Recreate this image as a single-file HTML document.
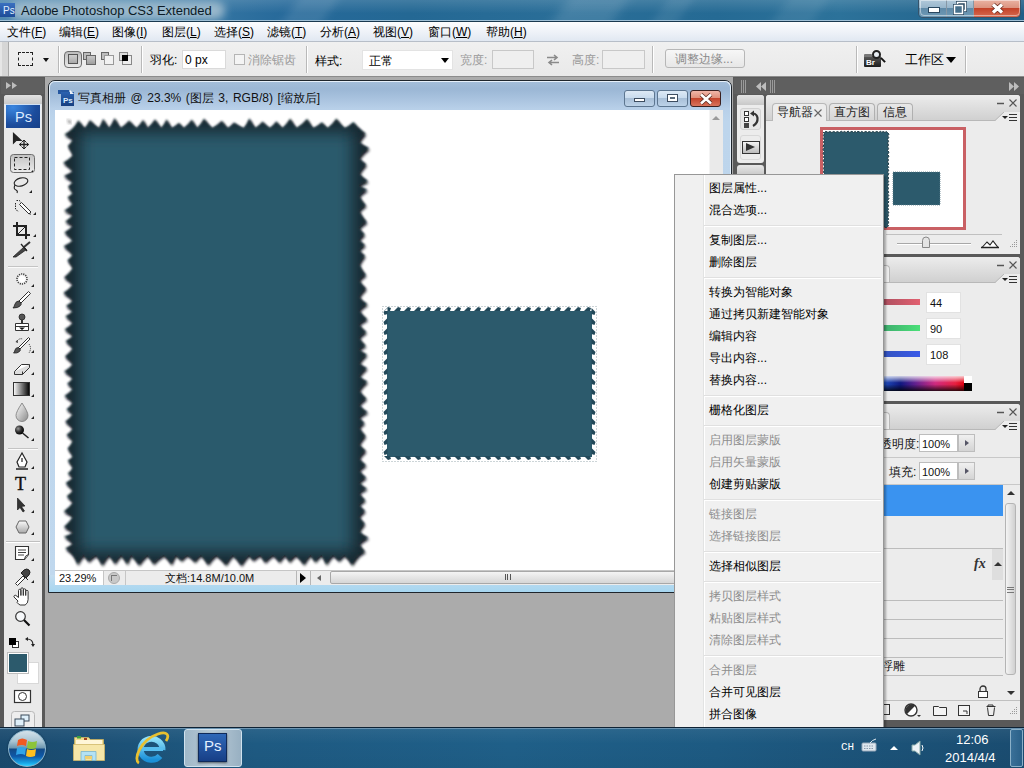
<!DOCTYPE html>
<html><head><meta charset="utf-8">
<style>
*{margin:0;padding:0;box-sizing:border-box}
html,body{width:1024px;height:768px;overflow:hidden;background:#ababab;font-family:"Liberation Sans",sans-serif;font-size:12px;color:#000;line-height:1}
.a{position:absolute}
svg{position:absolute;overflow:visible}
.t{position:absolute;white-space:nowrap;font-size:12px;line-height:14px}
.u{text-decoration:underline}
.mi{position:absolute;white-space:nowrap;font-size:12px;line-height:14px;color:#000}
.cm{position:absolute;left:709px;white-space:nowrap;font-size:12px;line-height:14px;color:#000}
.cm.d{color:#8d8d8d}
.sep{position:absolute;left:704px;width:177px;height:2px;border-top:1px solid #e0e0e0;border-bottom:1px solid #fff}
.vs{position:absolute;width:2px;border-left:1px solid #b9b9b9;border-right:1px solid #fff}
.inp{position:absolute;background:#fff;border:1px solid #c9c9c9}
.tb{position:absolute;left:0;width:45px;height:22px}
i.cjg{display:inline-block;width:1em;height:1em;vertical-align:-0.15em;position:relative;font-style:normal}
i.cjg::before{content:"";position:absolute;left:.1em;top:.06em;right:.12em;bottom:.1em;border:1px solid currentColor;opacity:.85;background:linear-gradient(currentColor,currentColor) 50% 0/1px 100% no-repeat,linear-gradient(currentColor,currentColor) 0 45%/100% 1px no-repeat}
</style></head><body>
<!-- title bar -->
<div class="a" style="left:0;top:0;width:1024px;height:22px;background:linear-gradient(90deg,#4f88b0 0%,#3f7ea8 15%,#26699a 28%,#246894 40%,#2a6e98 55%,#256a94 70%,#2c729a 82%,#205f88 100%);overflow:hidden">
 <div class="a" style="left:290px;top:-5px;width:40px;height:32px;background:rgba(255,255,255,.10);transform:skewX(-35deg);filter:blur(5px)"></div>
 <div class="a" style="left:560px;top:-5px;width:60px;height:32px;background:rgba(255,255,255,.12);transform:skewX(-35deg);filter:blur(6px)"></div>
 <div class="a" style="left:660px;top:-5px;width:25px;height:32px;background:rgba(255,255,255,.08);transform:skewX(-35deg);filter:blur(4px)"></div>
 <div class="a" style="left:780px;top:-5px;width:40px;height:32px;background:rgba(255,255,255,.08);transform:skewX(-35deg);filter:blur(5px)"></div>
</div>
<div class="a" style="left:0;top:0;width:1024px;height:22px;background:linear-gradient(#ffffff22,#ffffff00 60%)"></div>
<div class="a" style="left:10px;top:1px;width:215px;height:19px;border-radius:10px;background:#a4bfd0;filter:blur(4px);opacity:.9"></div>
<div class="a" style="left:0;top:20px;width:1024px;height:1px;background:#9fc0d6"></div>
<div class="a" style="left:0;top:21px;width:1024px;height:1px;background:#1a3a50"></div>
<!-- ps icon -->
<div class="a" style="left:0;top:3px;width:15px;height:14px;background:linear-gradient(#3a70c0,#1d4c98)"></div>
<div class="a" style="left:3px;top:5px;font-size:10px;line-height:11px;color:#e0f0ff">Ps</div>
<div class="t" style="left:21px;top:3px;font-size:13px;line-height:15px;color:#0b1a26">Adobe Photoshop CS3 Extended</div>
<!-- window buttons -->
<div class="a" style="left:918px;top:0;width:103px;height:18px;border:1px solid #36536a;border-top:none;border-radius:0 0 5px 5px;overflow:hidden">
  <div class="a" style="left:0;top:0;width:28px;height:17px;background:linear-gradient(#b1c9da 0%,#98b6cb 45%,#5f8aa8 50%,#6f9ab6 100%);border-right:1px solid #36536a"></div>
  <div class="a" style="left:28px;top:0;width:27px;height:17px;background:linear-gradient(#b1c9da 0%,#98b6cb 45%,#5f8aa8 50%,#6f9ab6 100%);border-right:1px solid #36536a"></div>
  <div class="a" style="left:55px;top:0;width:47px;height:17px;background:linear-gradient(#eab2a2 0%,#dc9480 45%,#c4432a 50%,#d56a50 100%)"></div>
  <div class="a" style="left:1px;top:0;width:100px;height:16px;border-top:none;border:1px solid rgba(255,255,255,.45);border-radius:0 0 4px 4px"></div>
  <div class="a" style="left:27px;top:0;width:1px;height:17px;background:rgba(255,255,255,.4)"></div>
  <div class="a" style="left:54px;top:0;width:1px;height:17px;background:rgba(255,255,255,.4)"></div>
  <div class="a" style="left:10px;top:8px;width:10px;height:4px;background:#fff;border:1px solid #2a4860;box-sizing:content-box;margin:-1px"></div>
  <svg width="20" height="16" style="left:33px;top:1px"><rect x="5.5" y="1.5" width="8" height="8" fill="none" stroke="#2a4860" stroke-width="3"/><rect x="5.5" y="1.5" width="8" height="8" fill="none" stroke="#fff" stroke-width="1.5"/><rect x="2.5" y="4.5" width="8" height="8" fill="#46708c" stroke="#2a4860" stroke-width="3"/><rect x="2.5" y="4.5" width="8" height="8" fill="#46708c" stroke="#fff" stroke-width="1.5"/></svg>
  <svg width="20" height="16" style="left:69px;top:1px"><path d="M5,3.5 L14,11.5 M14,3.5 L5,11.5" stroke="#6a2a1c" stroke-width="5"/><path d="M5,3.5 L14,11.5 M14,3.5 L5,11.5" stroke="#fff" stroke-width="3.4"/></svg>
</div>
<!-- menu bar -->
<div class="a" style="left:0;top:22px;width:1024px;height:20px;background:linear-gradient(#fcfdfe 0%,#eef2f8 50%,#dfe7f1 100%)"></div>
<div class="a" style="left:0;top:41px;width:1024px;height:1px;background:#b7bec8"></div>
<div class="mi" style="left:7px;top:25px">文件(<span class="u">F</span>)</div>
<div class="mi" style="left:59px;top:25px">编辑(<span class="u">E</span>)</div>
<div class="mi" style="left:112px;top:25px">图像(<span class="u">I</span>)</div>
<div class="mi" style="left:162px;top:25px">图层(<span class="u">L</span>)</div>
<div class="mi" style="left:214px;top:25px">选择(<span class="u">S</span>)</div>
<div class="mi" style="left:267px;top:25px">滤镜(<span class="u">T</span>)</div>
<div class="mi" style="left:320px;top:25px">分析(<span class="u">A</span>)</div>
<div class="mi" style="left:373px;top:25px">视图(<span class="u">V</span>)</div>
<div class="mi" style="left:428px;top:25px">窗口(<span class="u">W</span>)</div>
<div class="mi" style="left:486px;top:25px">帮助(<span class="u">H</span>)</div>
<!-- options bar -->
<div class="a" style="left:0;top:42px;width:1024px;height:34px;background:linear-gradient(#f0f0f0,#e9e9e9)"></div>
<div class="a" style="left:0;top:76px;width:1024px;height:1px;background:#8c8c8c"></div>
<div class="a" style="left:0;top:42px;width:9px;height:34px;background:#d6d6d6;border-left:2px solid #e6e6e6;border-right:1px solid #a9a9a9"></div>
<div class="vs" style="left:58px;top:46px;height:27px"></div>
<div class="vs" style="left:141px;top:46px;height:27px"></div>
<div class="vs" style="left:306px;top:46px;height:27px"></div>
<div class="vs" style="left:652px;top:46px;height:27px"></div>
<div class="vs" style="left:856px;top:46px;height:27px"></div>
<div class="vs" style="left:965px;top:46px;height:27px"></div>
<!-- marquee icon -->
<div class="a" style="left:18px;top:52px;width:15px;height:14px;border:1px dashed #222"></div>
<div class="a" style="left:43px;top:58px;width:0;height:0;border-left:3px solid transparent;border-right:3px solid transparent;border-top:4px solid #111"></div>
<!-- selection modes -->
<div class="a" style="left:64px;top:51px;width:18px;height:17px;border:1px solid #6d6d6d;border-radius:4px;background:linear-gradient(#bdbdbd,#e9e9e9)"></div>
<div class="a" style="left:68px;top:54px;width:10px;height:10px;border:1px solid #555;background:linear-gradient(#cfcfcf,#a9a9a9)"></div>
<div class="a" style="left:83px;top:52px;width:8px;height:8px;border:1px solid #666;background:#bdbdbd"></div>
<div class="a" style="left:86px;top:55px;width:10px;height:10px;border:1px solid #666;background:linear-gradient(#c8c8c8,#9f9f9f)"></div>
<div class="a" style="left:101px;top:52px;width:8px;height:8px;border:1px solid #666;background:#bdbdbd"></div>
<div class="a" style="left:104px;top:55px;width:10px;height:10px;border:1px solid #999;background:#f2f2f2"></div>
<div class="a" style="left:119px;top:52px;width:9px;height:9px;border:1px solid #888;background:#ddd"></div>
<div class="a" style="left:122px;top:55px;width:10px;height:10px;border:1px solid #888;background:#eee"></div>
<div class="a" style="left:122px;top:55px;width:6px;height:6px;background:#000"></div>
<!-- feather -->
<div class="t" style="left:150px;top:53px">羽化:</div>
<div class="inp" style="left:182px;top:50px;width:44px;height:19px;border-color:#dadada"></div>
<div class="t" style="left:185px;top:53px;font-size:12px">0 px</div>
<div class="a" style="left:234px;top:54px;width:11px;height:11px;border:1px solid #b5b5b5;background:#f4f4f4"></div>
<div class="t" style="left:248px;top:53px;color:#9a9a9a">消除锯齿</div>
<!-- style -->
<div class="t" style="left:315px;top:54px">样式:</div>
<div class="inp" style="left:362px;top:50px;width:91px;height:20px;border-color:#e3e3e3"></div>
<div class="t" style="left:369px;top:54px">正常</div>
<div class="a" style="left:441px;top:58px;width:0;height:0;border-left:4px solid transparent;border-right:4px solid transparent;border-top:5px solid #000"></div>
<div class="t" style="left:460px;top:53px;color:#9a9a9a">宽度:</div>
<div class="inp" style="left:492px;top:50px;width:42px;height:19px;background:#efefef;border-color:#c8c8c8"></div>
<svg width="14" height="12" style="left:546px;top:54px"><path d="M1,3.5 h10 M8,1 l3,2.5 l-3,2.5 M13,8.5 h-10 M6,6 l-3,2.5 l3,2.5" fill="none" stroke="#8a8a8a" stroke-width="1.6"/></svg>
<div class="t" style="left:572px;top:53px;color:#9a9a9a">高度:</div>
<div class="inp" style="left:602px;top:50px;width:43px;height:19px;background:#efefef;border-color:#c8c8c8"></div>
<div class="a" style="left:665px;top:49px;width:80px;height:19px;border:1px solid #b7b7b7;border-radius:3px;background:linear-gradient(#f7f7f7,#e7e7e7)"></div>
<div class="t" style="left:675px;top:52px;color:#8a8a8a">调整边缘...</div>
<!-- bridge -->
<div class="a" style="left:864px;top:56px;width:17px;height:11px;background:linear-gradient(#5a5a5a,#1d1d1d);border-radius:1px"></div>
<div class="a" style="left:864px;top:54px;width:8px;height:3px;background:#777;border-radius:1px 1px 0 0"></div>
<div class="t" style="left:866px;top:58px;font-size:8px;line-height:9px;color:#fff;font-weight:bold">Br</div>
<div class="a" style="left:872px;top:50px;width:9px;height:9px;border:2px solid #222;border-radius:50%;background:#e8eef4"></div>
<div class="a" style="left:880px;top:59px;width:6px;height:2px;background:#111;transform:rotate(45deg)"></div>
<div class="t" style="left:905px;top:52px;font-size:13px;line-height:15px">工作区</div>
<div class="a" style="left:946px;top:57px;width:0;height:0;border-left:5px solid transparent;border-right:5px solid transparent;border-top:6px solid #000"></div>
<!-- toolbox -->
<div class="a" style="left:0;top:77px;width:45px;height:650px;background:#595959"></div>
<div class="a" style="left:1px;top:78px;width:43px;height:16px;background:#5f5f5f"></div>
<svg width="14" height="8" style="left:6px;top:82px"><path d="M0,0 l5,3.5 l-5,3.5Z M6,0 l5,3.5 l-5,3.5Z" fill="#bdbdbd"/></svg>
<div class="a" style="left:4px;top:95px;width:38px;height:632px;background:#e9e9e9;border-radius:3px 3px 0 0"></div>
<div class="a" style="left:4px;top:95px;width:38px;height:9px;background:linear-gradient(#e2e2e2,#c9c9c9);border-radius:3px 3px 0 0"></div>
<div class="a" style="left:5px;top:104px;width:36px;height:24px;background:radial-gradient(ellipse at 20% 10%,#3a86e0,#1c4c9c 60%,#173f86);border-top:1px solid #cfe0f4;border-left:1px solid #e8eef6;border-right:1px solid #e8eef6"></div>
<div class="t" style="left:15px;top:109px;font-size:14.5px;line-height:16px;color:#dcebff">Ps</div>
<svg width="45" height="650" style="left:0;top:77px" viewBox="0 77 45 650">
 <g fill="none" stroke="#222" stroke-width="1.2">
  <!-- move -->
  <path d="M13.5,133.5 L13.5,143 L16,140.5 L21,140.5 Z" fill="#222"/>
  <path d="M24,140 v9 M19.5,144.5 h9" stroke-width="1.3"/>
  <path d="M22,142 l2,-2 l2,2 M22,147 l2,2 l2,-2 M21.5,142.5 l-2,2 l2,2 M26.5,142.5 l2,2 l-2,2" stroke-width="1"/>
 </g>
 <!-- marquee selected -->
 <rect x="10.5" y="154.5" width="24" height="18" rx="3" fill="url(#gsel)" stroke="#6b6b6b"/>
 <rect x="14.5" y="157.5" width="15" height="12" fill="none" stroke="#222" stroke-dasharray="3,2"/>
 <defs><linearGradient id="gsel" x1="0" y1="0" x2="0" y2="1"><stop offset="0" stop-color="#c2c2c2"/><stop offset="1" stop-color="#ececec"/></linearGradient></defs>
 <g fill="none" stroke="#222" stroke-width="1.1">
  <!-- lasso -->
  <ellipse cx="21" cy="182" rx="7" ry="4" transform="rotate(-15 21 182)"/>
  <path d="M15,185 q-2,4 1,5 q2,1 1,3"/>
  <!-- magic wand -->
  <path d="M16.5,200.5 h3 l1,2 M15.5,203 v6 l3,3" stroke-dasharray="1.5,1" stroke-width="1"/>
  <path d="M19.5,204.5 L21.5,202.5 L31,212 L29,214Z" fill="#fff" stroke="#333" stroke-width="1"/>
  <path d="M29,214 l2,1 l-1,-2.5" fill="#333" stroke="none"/>
  <!-- crop -->
  <path d="M17,222 v13 h13 M13,226 h13 v13" stroke-width="2"/>
  <path d="M17,235 L27,225" stroke-width="1"/>
  <!-- slice -->
  <path d="M13,257 L24,247 L26.5,249.5 L16,257Z" fill="#444" stroke="#222" stroke-width=".8"/>
  <path d="M24,247 L30,242" stroke="#333" stroke-width="2"/>
  <path d="M21,244 l6,7" stroke="#222" stroke-width="1.3"/>
 </g>
 <line x1="8" y1="266.5" x2="38" y2="266.5" stroke="#c4c4c4"/>
 <line x1="8" y1="267.5" x2="38" y2="267.5" stroke="#fafafa"/>
 <g fill="none" stroke="#222" stroke-width="1.1">
  <!-- healing -->
  <circle cx="22" cy="279" r="5" fill="#f4f4f4" stroke="#444" stroke-width="1.6" stroke-dasharray="1.2,1"/>
  <circle cx="22" cy="279" r="3" fill="#fff" stroke="none"/>
  <!-- brush -->
  <path d="M30.5,293.5 L21,303 L19,301 L28.5,291.5Z" fill="#fff" stroke="#333" stroke-width="1"/>
  <path d="M19,301 q-3,0 -4,3 q-1,3 -2,4 q5,0 7,-2 q2,-2 1,-3Z" fill="#555" stroke="#222" stroke-width=".8"/>
  <!-- stamp -->
  <circle cx="22" cy="317" r="3" fill="#555" stroke="#222" stroke-width=".8"/>
  <path d="M21,320 h2 v3 h-2Z" fill="#333" stroke="none"/>
  <path d="M15.5,323.5 h13 v7 h-13Z" fill="#fff" stroke="#333" stroke-width="1"/>
  <path d="M15.5,326.5 h13" stroke="#333" stroke-width="1"/>
  <path d="M19,327.5 h6 l-3,2.5Z" fill="#111" stroke="none"/>
  <!-- history brush -->
  <path d="M30,339 L20,349 L18.5,347.5 L28.5,337.5Z" fill="#fff" stroke="#333" stroke-width="1"/>
  <path d="M18.5,347.5 q-3,0 -3.5,2.5 q-.5,2.5 -1.5,3 q4,.5 6,-1.5 q1.5,-1.5 .5,-2.5Z" fill="#555" stroke="#222" stroke-width=".8"/>
  <path d="M17,341 q2,-3 6,-2 M29,344 q3,4 0,9" fill="none" stroke="#333" stroke-width="1" stroke-dasharray="1.2,1"/>
  <path d="M15.5,342 l2,-2 l.5,3Z" fill="#333" stroke="none"/>
  <!-- eraser -->
  <path d="M14.5,371.5 L21.5,364.5 H29.5 L22.5,371.5Z" fill="#fff" stroke="#333" stroke-width="1"/>
  <path d="M14.5,371.5 v3 h8 l7,-7 v-3 M22.5,371.5 v3" fill="#ddd" stroke="#333" stroke-width="1"/>
 </g>
 <!-- gradient -->
 <defs><linearGradient id="grd"><stop offset="0" stop-color="#fff"/><stop offset="1" stop-color="#000"/></linearGradient></defs>
 <rect x="13.5" y="382.5" width="16" height="13" fill="url(#grd)" stroke="#333"/>
 <defs>
  <linearGradient id="gdrop" x1="0" y1="0" x2="1" y2="1"><stop offset="0" stop-color="#fff"/><stop offset="1" stop-color="#8a8a8a"/></linearGradient>
  <radialGradient id="gball" cx=".35" cy=".35" r=".7"><stop offset="0" stop-color="#999"/><stop offset=".5" stop-color="#333"/><stop offset="1" stop-color="#000"/></radialGradient>
  <linearGradient id="ghex" x1="0" y1="0" x2="0" y2="1"><stop offset="0" stop-color="#fafafa"/><stop offset="1" stop-color="#aaa"/></linearGradient>
 </defs>
 <path d="M22,403 q-6,9 -6,12.5 a6,6 0 0 0 12,0 q0,-3.5 -6,-12.5Z" fill="url(#gdrop)" stroke="#777" stroke-width=".8"/>
 <circle cx="19.5" cy="430" r="4.5" fill="url(#gball)"/>
 <path d="M22.5,433 l6,5" stroke="#222" stroke-width="1.5"/>
 <line x1="8" y1="448.5" x2="38" y2="448.5" stroke="#c4c4c4"/>
 <line x1="8" y1="449.5" x2="38" y2="449.5" stroke="#fafafa"/>
 <g fill="none" stroke="#222" stroke-width="1.2">
  <!-- pen -->
  <path d="M22,453 L17,462 L19,467 H25 L27,462 Z" fill="#fff"/>
  <path d="M22,458 v4" />
  <path d="M16,469 h12" stroke-width="1.5"/>
 </g>
 <text x="15" y="490" font-family="Liberation Serif" font-size="18" fill="#111" stroke="#111" stroke-width=".4">T</text>
 <path d="M17.5,498 L17.5,510 L20,507.5 L23,512 L24.5,511 L21.5,506.5 L25,506 Z" fill="#333" stroke="#111" stroke-width=".6"/>
 <path d="M16,527 L19,521 L26,521 L29,527 L26,533 L19,533 Z" fill="url(#ghex)" stroke="#666" stroke-width="1"/>
 <line x1="6" y1="541.5" x2="40" y2="541.5" stroke="#c0c0c0"/>
 <line x1="6" y1="542.5" x2="40" y2="542.5" stroke="#fff"/>
 <g fill="none" stroke="#222" stroke-width="1.1">
  <!-- notes -->
  <path d="M15.5,546.5 h13 v8 l-4,5 h-9 Z" fill="#fff" stroke="#333" stroke-width="1.1"/>
  <path d="M24.5,559.5 q0,-4 4,-5" fill="#ddd" stroke="#333" stroke-width="1"/>
  <path d="M18,550 h8 M18,552.5 h8 M18,555 h6" stroke="#444" stroke-width="1"/>
  <!-- eyedropper -->
  <path d="M15.5,583.5 L23,576 L25,578 L17.5,585.5Z" fill="#fff" stroke="#333" stroke-width="1"/>
  <path d="M22,574 l6,6 M24,570 q3,-2 5,0 q2,2 0,5 l-3,3 l-5,-5Z" fill="#444" stroke="#222" stroke-width="1"/>
 </g>
 <!-- hand -->
 <path d="M18,601 l-4,-4 a1.3,1.3 0 0 1 2,-1.5 l2.5,2 v-7 a1.2,1.2 0 0 1 2.4,0 v5 v-6.5 a1.2,1.2 0 0 1 2.4,0 v6.5 v-5.5 a1.2,1.2 0 0 1 2.4,0 v5.5 v-4 a1.2,1.2 0 0 1 2.4,0 v8 q0,4 -3,5.5 h-5 q-2,-1 -3,-2.5Z" fill="#fff" stroke="#333" stroke-width="1"/>
 <!-- zoom -->
 <circle cx="20.5" cy="616.5" r="4.8" fill="#f6f8fa" stroke="#333" stroke-width="1.2"/>
 <path d="M24,620 l5.5,5.5" stroke="#111" stroke-width="2.2"/>
 <!-- default colors -->
 <rect x="12.5" y="641.5" width="6" height="6" fill="#fff" stroke="#333"/>
 <rect x="9" y="638" width="7" height="7" fill="#000"/>
 <path d="M27,639 q6,0 6,6" fill="none" stroke="#222" stroke-width="1.2"/>
 <path d="M25,639 l3,-2 v4Z M33,647 l-2,-3 h4Z" fill="#222"/>
 <!-- swatches -->
 <rect x="17.5" y="662.5" width="21" height="21" fill="#fff" stroke="#d8d8d8"/>
 <rect x="8.5" y="653.5" width="19" height="19" fill="#2c5a6c" stroke="#fff"/>
 <rect x="7.5" y="652.5" width="21" height="21" fill="none" stroke="#bdbdbd"/>
 <!-- quick mask -->
 <rect x="14.5" y="690.5" width="16" height="12" fill="#fff" stroke="#333" stroke-width="1.2"/>
 <circle cx="22.5" cy="696.5" r="4" fill="#fff" stroke="#333"/>
 <!-- screen mode -->
 <rect x="11.5" y="711.5" width="23" height="18" rx="3" fill="#eee" stroke="#b8b8b8"/>
 <rect x="21" y="715" width="8" height="6" fill="#dff0fa" stroke="#3a4a5a"/>
 <rect x="15" y="719" width="9" height="7" fill="#dff0fa" stroke="#3a4a5a"/>
 <!-- corner arrows -->
 <g fill="#222">
  <path d="M29,193 h3 v-3Z M33,215 h3 v-3Z M33,237 h3 v-3Z M31,259 h3 v-3Z M31,287 h3 v-3Z M31,309 h3 v-3Z M31,331 h3 v-3Z M31,353 h3 v-3Z M31,375 h3 v-3Z M31,397 h3 v-3Z M31,419 h3 v-3Z M31,441 h3 v-3Z M31,469 h3 v-3Z M31,491 h3 v-3Z M31,513 h3 v-3Z M31,535 h3 v-3Z M31,561 h3 v-3Z M31,583 h3 v-3Z M31,172 h2 v-2Z"/>
 </g>
</svg>
<!-- document window -->
<div class="a" style="left:48px;top:80px;width:684px;height:513px;border:1px solid #1e252c;border-radius:7px 7px 0 0;background:linear-gradient(#a4bed9 0px,#9bb7d5 8px,#a9c3df 18px,#b8d0e9 28px,#bdd5ec 40px,#c0d8ee 100%)"></div>
<div class="a" style="left:49px;top:81px;width:682px;height:511px;border:1px solid #e6f0fa;border-bottom:none;border-radius:6px 6px 0 0"></div>
<div class="a" style="left:49px;top:575px;width:682px;height:17px;background:linear-gradient(#c4dcef,#a6d6f0)"></div>
<!-- doc icon -->
<div class="a" style="left:58px;top:90px;width:16px;height:16px">
 <div class="a" style="left:0;top:0;width:11px;height:4px;background:#2557a0"></div>
 <div class="a" style="left:3px;top:2px;width:13px;height:14px;background:linear-gradient(#2b62b0,#163f80)"></div>
 <div class="a" style="left:12px;top:0;width:0;height:0;border-left:4px solid #fff;border-top:4px solid transparent;opacity:.9"></div>
 <div class="a" style="left:5px;top:6px;font-size:8px;line-height:9px;color:#d8ecff;font-weight:bold">Ps</div>
</div>
<div class="t" style="left:78px;top:91px;font-size:12px;word-spacing:1.2px;line-height:15px;color:#111">写真相册 @ 23.3% (图层 3, RGB/8) [缩放后]</div>
<!-- doc window buttons -->
<div class="a" style="left:624px;top:90px;width:31px;height:17px;border:1px solid #5d7690;border-radius:3px;background:linear-gradient(#dde9f5 0%,#c9dcee 45%,#a9c0d8 50%,#bcd2e8 100%)"></div>
<div class="a" style="left:634px;top:98px;width:11px;height:4px;background:#fff;border:1px solid #3d4d60"></div>
<div class="a" style="left:657px;top:90px;width:31px;height:17px;border:1px solid #5d7690;border-radius:3px;background:linear-gradient(#dde9f5 0%,#c9dcee 45%,#a9c0d8 50%,#bcd2e8 100%)"></div>
<div class="a" style="left:667px;top:94px;width:11px;height:8px;background:#fff;border:1px solid #3d4d60"></div>
<div class="a" style="left:670px;top:97px;width:5px;height:2px;background:#5a6a7a"></div>
<div class="a" style="left:690px;top:90px;width:31px;height:17px;border:1px solid #3a2020;border-radius:3px;background:linear-gradient(#f0b6a8 0%,#e0917c 45%,#c4452d 50%,#d9745c 100%)"></div>
<svg width="14" height="12" style="left:699px;top:93px"><path d="M2,1.5 L12,10.5 M12,1.5 L2,10.5" stroke="#5a2a20" stroke-width="4.2"/><path d="M2,1.5 L12,10.5 M12,1.5 L2,10.5" stroke="#fff" stroke-width="2.6"/></svg>
<!-- canvas -->
<div class="a" style="left:55px;top:110px;width:654px;height:460px;background:#fff"></div>
<!-- v scrollbar -->
<div class="a" style="left:709px;top:110px;width:14px;height:460px;background:#eaeaea;border-left:1px solid #f4f4f4"></div>
<div class="a" style="left:712px;top:116px;width:0;height:0;border-left:4px solid transparent;border-right:4px solid transparent;border-bottom:4px solid #9a9a9a"></div>
<!-- status bar -->
<div class="a" style="left:55px;top:570px;width:668px;height:15px;background:#ececec;border-top:1px solid #c6c6c6"></div>
<div class="a" style="left:55px;top:571px;width:48px;height:14px;background:#fff"></div>
<div class="t" style="left:59px;top:572px;font-size:11px;line-height:13px;color:#111">23.29%</div>
<div class="a" style="left:103px;top:571px;width:1px;height:14px;background:#c6c6c6"></div>
<div class="a" style="left:108px;top:572px;width:12px;height:12px;border-radius:50%;background:#c8c8c8;border:1px solid #aaa"></div>
<div class="a" style="left:111px;top:575px;width:6px;height:6px;border:1px solid #777;border-right:none;border-bottom:none"></div>
<div class="a" style="left:125px;top:571px;width:1px;height:14px;background:#c6c6c6"></div>
<div class="t" style="left:165px;top:572px;font-size:11px;line-height:13px;color:#111">文档:14.8M/10.0M</div>
<div class="a" style="left:296px;top:571px;width:1px;height:14px;background:#b6b6b6"></div>
<div class="a" style="left:300px;top:573px;width:0;height:0;border-top:5px solid transparent;border-bottom:5px solid transparent;border-left:6px solid #000"></div>
<div class="a" style="left:310px;top:571px;width:1px;height:14px;background:#b6b6b6"></div>
<div class="a" style="left:317px;top:575px;width:0;height:0;border-top:3px solid transparent;border-bottom:3px solid transparent;border-right:4px solid #666"></div>
<div class="a" style="left:330px;top:571px;width:360px;height:13px;border:1px solid #a8a8a8;border-radius:2px;background:linear-gradient(#f4f4f4,#d6d6d6)"></div>
<div class="a" style="left:505px;top:574px;width:6px;height:6px;border-left:1px solid #555;border-right:1px solid #555"></div>
<div class="a" style="left:507px;top:574px;width:1px;height:6px;background:#555"></div>
<!-- shapes -->
<svg width="1024" height="768" style="left:0;top:0" viewBox="0 0 1024 768">
 <defs>
  <clipPath id="cvclip"><rect x="55" y="110" width="654" height="460"/></clipPath>
  <clipPath id="bjc"><path d="M73.0,128.0 Q75.7,125.3 78.4,120.3 Q81.5,125.3 84.7,128.0 L84.7,128.0 Q87.3,125.2 89.9,119.9 Q94.4,125.2 98.9,128.0 L98.9,128.0 Q101.1,124.8 103.2,118.8 Q106.1,124.8 109.0,128.0 L109.0,128.0 Q111.8,124.5 114.7,118.0 Q117.7,124.5 120.6,128.0 L120.6,128.0 Q124.9,125.4 129.2,120.6 Q132.8,125.4 136.5,128.0 L136.5,128.0 Q139.9,125.1 143.2,119.8 Q145.4,125.1 147.5,128.0 L147.5,128.0 Q151.3,125.0 155.1,119.3 Q158.1,125.0 161.2,128.0 L161.2,128.0 Q164.0,124.9 166.7,119.2 Q169.2,124.9 171.6,128.0 L171.6,128.0 Q175.3,126.2 179.0,122.8 Q181.4,126.2 183.8,128.0 L183.8,128.0 Q187.8,125.0 191.9,119.4 Q194.5,125.0 197.1,128.0 L197.1,128.0 Q200.6,124.6 204.1,118.4 Q208.1,124.6 212.1,128.0 L212.1,128.0 Q217.0,125.5 221.9,120.8 Q224.8,125.5 227.7,128.0 L227.7,128.0 Q230.8,126.1 234.0,122.5 Q238.9,126.1 243.8,128.0 L243.8,128.0 Q246.6,124.6 249.4,118.2 Q252.4,124.6 255.3,128.0 L255.3,128.0 Q259.0,125.7 262.6,121.5 Q266.1,125.7 269.7,128.0 L269.7,128.0 Q273.1,125.6 276.4,121.2 Q279.4,125.6 282.4,128.0 L282.4,128.0 Q286.3,124.7 290.2,118.5 Q293.4,124.7 296.5,128.0 L296.5,128.0 Q301.9,124.8 307.2,118.7 Q310.1,124.8 313.0,128.0 L313.0,128.0 Q317.5,126.0 322.0,122.2 Q324.8,126.0 327.7,128.0 L327.7,128.0 Q332.1,124.7 336.4,118.5 Q340.5,124.7 344.5,128.0 L344.5,128.0 Q349.0,125.9 353.5,121.9 Q356.2,125.9 359.0,128.0 L359.0,128.0 Q361.2,130.6 365.4,133.2 Q361.2,137.6 359.0,142.0 L359.0,142.0 Q362.5,145.0 368.9,148.0 Q362.5,153.0 359.0,158.0 L359.0,158.0 Q361.5,161.1 366.1,164.2 Q361.5,168.9 359.0,173.6 L359.0,173.6 Q362.1,177.3 367.8,181.0 Q362.1,183.3 359.0,185.7 L359.0,185.7 Q361.8,187.5 367.1,189.4 Q361.8,192.7 359.0,196.0 L359.0,196.0 Q361.3,200.6 365.7,205.2 Q361.3,208.1 359.0,211.0 L359.0,211.0 Q361.6,216.5 366.5,221.9 Q361.6,224.9 359.0,227.9 L359.0,227.9 Q360.9,231.1 364.4,234.3 Q360.9,237.2 359.0,240.0 L359.0,240.0 Q361.1,242.4 365.0,244.9 Q361.1,247.5 359.0,250.2 L359.0,250.2 Q361.0,252.8 364.8,255.4 Q361.0,260.0 359.0,264.5 L359.0,264.5 Q361.3,269.6 365.6,274.8 Q361.3,277.7 359.0,280.6 L359.0,280.6 Q361.4,284.6 365.9,288.5 Q361.4,292.7 359.0,296.9 L359.0,296.9 Q361.9,300.5 367.2,304.1 Q361.9,307.3 359.0,310.5 L359.0,310.5 Q361.8,314.9 367.1,319.3 Q361.8,321.9 359.0,324.4 L359.0,324.4 Q361.5,328.3 366.2,332.1 Q361.5,335.0 359.0,338.0 L359.0,338.0 Q361.3,341.7 365.5,345.5 Q361.3,347.6 359.0,349.6 L359.0,349.6 Q361.7,352.0 366.7,354.5 Q361.7,358.9 359.0,363.3 L359.0,363.3 Q361.8,365.6 366.9,367.9 Q361.8,372.0 359.0,376.2 L359.0,376.2 Q361.9,378.8 367.2,381.5 Q361.9,386.0 359.0,390.5 L359.0,390.5 Q361.6,394.5 366.3,398.5 Q361.6,401.7 359.0,404.9 L359.0,404.9 Q362.0,408.5 367.5,412.0 Q362.0,414.7 359.0,417.4 L359.0,417.4 Q360.9,420.2 364.3,423.0 Q360.9,425.2 359.0,427.5 L359.0,427.5 Q361.2,431.6 365.3,435.7 Q361.2,440.0 359.0,444.3 L359.0,444.3 Q361.3,447.5 365.6,450.8 Q361.3,454.6 359.0,458.4 L359.0,458.4 Q361.4,461.6 365.8,464.9 Q361.4,467.7 359.0,470.6 L359.0,470.6 Q361.4,474.1 365.9,477.6 Q361.4,480.2 359.0,482.7 L359.0,482.7 Q361.7,485.6 366.8,488.5 Q361.7,490.7 359.0,492.9 L359.0,492.9 Q361.1,496.5 365.1,500.1 Q361.1,502.6 359.0,505.1 L359.0,505.1 Q361.1,507.9 364.9,510.7 Q361.1,513.7 359.0,516.7 L359.0,516.7 Q360.9,520.1 364.5,523.4 Q360.9,527.5 359.0,531.6 L359.0,531.6 Q362.2,534.6 368.2,537.6 Q362.2,540.8 359.0,544.0 L359.0,544.0 Q361.0,547.6 364.8,551.2 Q361.0,553.1 359.0,555.0 L359.0,555.0 Q355.5,558.3 351.9,564.4 Q348.2,558.3 344.4,555.0 L344.4,555.0 Q341.5,557.0 338.6,560.6 Q335.7,557.0 332.9,555.0 L332.9,555.0 Q329.5,558.2 326.1,564.0 Q323.8,558.2 321.5,555.0 L321.5,555.0 Q318.2,557.2 314.9,561.4 Q312.6,557.2 310.3,555.0 L310.3,555.0 Q307.0,558.2 303.7,564.0 Q299.7,558.2 295.8,555.0 L295.8,555.0 Q292.6,557.3 289.3,561.5 Q287.1,557.3 284.9,555.0 L284.9,555.0 Q282.0,557.4 279.2,561.7 Q276.1,557.4 273.0,555.0 L273.0,555.0 Q268.9,557.5 264.9,562.0 Q262.4,557.5 260.0,555.0 L260.0,555.0 Q256.5,556.8 253.0,560.0 Q251.0,556.8 248.9,555.0 L248.9,555.0 Q245.0,558.5 241.2,564.9 Q237.0,558.5 232.8,555.0 L232.8,555.0 Q229.3,558.4 225.8,564.6 Q221.0,558.4 216.1,555.0 L216.1,555.0 Q211.9,558.2 207.8,564.2 Q204.3,558.2 200.9,555.0 L200.9,555.0 Q197.8,557.3 194.7,561.4 Q191.0,557.3 187.3,555.0 L187.3,555.0 Q184.2,556.9 181.2,560.3 Q178.4,556.9 175.7,555.0 L175.7,555.0 Q173.5,558.2 171.3,564.1 Q167.5,558.2 163.7,555.0 L163.7,555.0 Q158.5,558.0 153.4,563.5 Q150.4,558.0 147.3,555.0 L147.3,555.0 Q143.1,558.3 138.8,564.5 Q134.9,558.3 131.1,555.0 L131.1,555.0 Q129.0,558.1 127.0,563.7 Q124.0,558.1 121.0,555.0 L121.0,555.0 Q117.9,557.9 114.8,563.3 Q111.8,557.9 108.9,555.0 L108.9,555.0 Q105.4,558.4 102.0,564.7 Q99.0,558.4 96.0,555.0 L96.0,555.0 Q92.2,557.2 88.4,561.3 Q86.0,557.2 83.6,555.0 L83.6,555.0 Q80.5,558.1 77.5,563.9 Q75.3,558.1 73.0,555.0 L73.0,555.0 Q70.3,551.6 65.3,548.2 Q70.3,545.9 73.0,543.6 L73.0,543.6 Q69.9,540.1 64.0,536.6 Q69.9,534.5 73.0,532.4 L73.0,532.4 Q69.8,529.7 63.9,526.9 Q69.8,521.8 73.0,516.8 L73.0,516.8 Q69.7,514.1 63.7,511.5 Q69.7,506.9 73.0,502.4 L73.0,502.4 Q70.8,499.4 66.7,496.3 Q70.8,493.4 73.0,490.5 L73.0,490.5 Q70.4,486.7 65.6,482.9 Q70.4,480.2 73.0,477.5 L73.0,477.5 Q71.2,475.6 67.7,473.6 Q71.2,470.6 73.0,467.5 L73.0,467.5 Q71.1,464.0 67.7,460.5 Q71.1,458.6 73.0,456.6 L73.0,456.6 Q71.1,452.6 67.6,448.6 Q71.1,444.6 73.0,440.7 L73.0,440.7 Q70.7,437.9 66.4,435.1 Q70.7,431.8 73.0,428.4 L73.0,428.4 Q70.2,425.1 65.1,421.8 Q70.2,417.8 73.0,413.9 L73.0,413.9 Q70.7,411.7 66.4,409.5 Q70.7,406.0 73.0,402.6 L73.0,402.6 Q70.0,399.4 64.4,396.1 Q70.0,392.4 73.0,388.7 L73.0,388.7 Q70.9,386.2 67.1,383.8 Q70.9,381.0 73.0,378.1 L73.0,378.1 Q69.9,374.8 64.1,371.5 Q69.9,367.7 73.0,363.9 L73.0,363.9 Q70.2,360.2 64.9,356.4 Q70.2,352.3 73.0,348.3 L73.0,348.3 Q70.4,344.8 65.5,341.2 Q70.4,338.4 73.0,335.7 L73.0,335.7 Q70.0,332.5 64.5,329.4 Q70.0,326.0 73.0,322.7 L73.0,322.7 Q70.3,319.5 65.3,316.2 Q70.3,313.6 73.0,311.0 L73.0,311.0 Q70.5,308.5 65.9,306.0 Q70.5,303.3 73.0,300.5 L73.0,300.5 Q69.6,296.8 63.3,293.0 Q69.6,288.7 73.0,284.4 L73.0,284.4 Q69.9,280.9 64.0,277.4 Q69.9,272.7 73.0,268.1 L73.0,268.1 Q71.0,264.1 67.4,260.2 Q71.0,257.5 73.0,254.8 L73.0,254.8 Q69.7,250.5 63.6,246.2 Q69.7,243.2 73.0,240.2 L73.0,240.2 Q70.0,236.4 64.3,232.6 Q70.0,229.0 73.0,225.5 L73.0,225.5 Q70.2,223.6 65.1,221.7 Q70.2,218.3 73.0,214.8 L73.0,214.8 Q69.9,212.8 64.1,210.8 Q69.9,207.3 73.0,203.8 L73.0,203.8 Q71.1,200.5 67.5,197.3 Q71.1,195.2 73.0,193.1 L73.0,193.1 Q71.2,189.8 67.9,186.4 Q71.2,184.1 73.0,181.9 L73.0,181.9 Q69.8,178.9 63.8,175.9 Q69.8,173.5 73.0,171.0 L73.0,171.0 Q69.6,166.9 63.2,162.7 Q69.6,159.0 73.0,155.2 L73.0,155.2 Q71.2,150.7 67.8,146.1 Q71.2,142.9 73.0,139.6 L73.0,139.6 Q70.0,137.0 64.4,134.4 Q70.0,131.2 73.0,128.0Z"/></clipPath>
  <filter id="b1" x="-10%" y="-10%" width="120%" height="120%"><feGaussianBlur stdDeviation="1"/></filter>
  <filter id="b2" x="-10%" y="-10%" width="120%" height="120%"><feGaussianBlur stdDeviation="1.6"/></filter>
  <filter id="b12" x="-20%" y="-20%" width="140%" height="140%"><feGaussianBlur stdDeviation="8"/></filter>
 </defs>
 <g clip-path="url(#cvclip)">
  <path d="M73.0,128.0 Q75.7,125.3 78.4,120.3 Q81.5,125.3 84.7,128.0 L84.7,128.0 Q87.3,125.2 89.9,119.9 Q94.4,125.2 98.9,128.0 L98.9,128.0 Q101.1,124.8 103.2,118.8 Q106.1,124.8 109.0,128.0 L109.0,128.0 Q111.8,124.5 114.7,118.0 Q117.7,124.5 120.6,128.0 L120.6,128.0 Q124.9,125.4 129.2,120.6 Q132.8,125.4 136.5,128.0 L136.5,128.0 Q139.9,125.1 143.2,119.8 Q145.4,125.1 147.5,128.0 L147.5,128.0 Q151.3,125.0 155.1,119.3 Q158.1,125.0 161.2,128.0 L161.2,128.0 Q164.0,124.9 166.7,119.2 Q169.2,124.9 171.6,128.0 L171.6,128.0 Q175.3,126.2 179.0,122.8 Q181.4,126.2 183.8,128.0 L183.8,128.0 Q187.8,125.0 191.9,119.4 Q194.5,125.0 197.1,128.0 L197.1,128.0 Q200.6,124.6 204.1,118.4 Q208.1,124.6 212.1,128.0 L212.1,128.0 Q217.0,125.5 221.9,120.8 Q224.8,125.5 227.7,128.0 L227.7,128.0 Q230.8,126.1 234.0,122.5 Q238.9,126.1 243.8,128.0 L243.8,128.0 Q246.6,124.6 249.4,118.2 Q252.4,124.6 255.3,128.0 L255.3,128.0 Q259.0,125.7 262.6,121.5 Q266.1,125.7 269.7,128.0 L269.7,128.0 Q273.1,125.6 276.4,121.2 Q279.4,125.6 282.4,128.0 L282.4,128.0 Q286.3,124.7 290.2,118.5 Q293.4,124.7 296.5,128.0 L296.5,128.0 Q301.9,124.8 307.2,118.7 Q310.1,124.8 313.0,128.0 L313.0,128.0 Q317.5,126.0 322.0,122.2 Q324.8,126.0 327.7,128.0 L327.7,128.0 Q332.1,124.7 336.4,118.5 Q340.5,124.7 344.5,128.0 L344.5,128.0 Q349.0,125.9 353.5,121.9 Q356.2,125.9 359.0,128.0 L359.0,128.0 Q361.2,130.6 365.4,133.2 Q361.2,137.6 359.0,142.0 L359.0,142.0 Q362.5,145.0 368.9,148.0 Q362.5,153.0 359.0,158.0 L359.0,158.0 Q361.5,161.1 366.1,164.2 Q361.5,168.9 359.0,173.6 L359.0,173.6 Q362.1,177.3 367.8,181.0 Q362.1,183.3 359.0,185.7 L359.0,185.7 Q361.8,187.5 367.1,189.4 Q361.8,192.7 359.0,196.0 L359.0,196.0 Q361.3,200.6 365.7,205.2 Q361.3,208.1 359.0,211.0 L359.0,211.0 Q361.6,216.5 366.5,221.9 Q361.6,224.9 359.0,227.9 L359.0,227.9 Q360.9,231.1 364.4,234.3 Q360.9,237.2 359.0,240.0 L359.0,240.0 Q361.1,242.4 365.0,244.9 Q361.1,247.5 359.0,250.2 L359.0,250.2 Q361.0,252.8 364.8,255.4 Q361.0,260.0 359.0,264.5 L359.0,264.5 Q361.3,269.6 365.6,274.8 Q361.3,277.7 359.0,280.6 L359.0,280.6 Q361.4,284.6 365.9,288.5 Q361.4,292.7 359.0,296.9 L359.0,296.9 Q361.9,300.5 367.2,304.1 Q361.9,307.3 359.0,310.5 L359.0,310.5 Q361.8,314.9 367.1,319.3 Q361.8,321.9 359.0,324.4 L359.0,324.4 Q361.5,328.3 366.2,332.1 Q361.5,335.0 359.0,338.0 L359.0,338.0 Q361.3,341.7 365.5,345.5 Q361.3,347.6 359.0,349.6 L359.0,349.6 Q361.7,352.0 366.7,354.5 Q361.7,358.9 359.0,363.3 L359.0,363.3 Q361.8,365.6 366.9,367.9 Q361.8,372.0 359.0,376.2 L359.0,376.2 Q361.9,378.8 367.2,381.5 Q361.9,386.0 359.0,390.5 L359.0,390.5 Q361.6,394.5 366.3,398.5 Q361.6,401.7 359.0,404.9 L359.0,404.9 Q362.0,408.5 367.5,412.0 Q362.0,414.7 359.0,417.4 L359.0,417.4 Q360.9,420.2 364.3,423.0 Q360.9,425.2 359.0,427.5 L359.0,427.5 Q361.2,431.6 365.3,435.7 Q361.2,440.0 359.0,444.3 L359.0,444.3 Q361.3,447.5 365.6,450.8 Q361.3,454.6 359.0,458.4 L359.0,458.4 Q361.4,461.6 365.8,464.9 Q361.4,467.7 359.0,470.6 L359.0,470.6 Q361.4,474.1 365.9,477.6 Q361.4,480.2 359.0,482.7 L359.0,482.7 Q361.7,485.6 366.8,488.5 Q361.7,490.7 359.0,492.9 L359.0,492.9 Q361.1,496.5 365.1,500.1 Q361.1,502.6 359.0,505.1 L359.0,505.1 Q361.1,507.9 364.9,510.7 Q361.1,513.7 359.0,516.7 L359.0,516.7 Q360.9,520.1 364.5,523.4 Q360.9,527.5 359.0,531.6 L359.0,531.6 Q362.2,534.6 368.2,537.6 Q362.2,540.8 359.0,544.0 L359.0,544.0 Q361.0,547.6 364.8,551.2 Q361.0,553.1 359.0,555.0 L359.0,555.0 Q355.5,558.3 351.9,564.4 Q348.2,558.3 344.4,555.0 L344.4,555.0 Q341.5,557.0 338.6,560.6 Q335.7,557.0 332.9,555.0 L332.9,555.0 Q329.5,558.2 326.1,564.0 Q323.8,558.2 321.5,555.0 L321.5,555.0 Q318.2,557.2 314.9,561.4 Q312.6,557.2 310.3,555.0 L310.3,555.0 Q307.0,558.2 303.7,564.0 Q299.7,558.2 295.8,555.0 L295.8,555.0 Q292.6,557.3 289.3,561.5 Q287.1,557.3 284.9,555.0 L284.9,555.0 Q282.0,557.4 279.2,561.7 Q276.1,557.4 273.0,555.0 L273.0,555.0 Q268.9,557.5 264.9,562.0 Q262.4,557.5 260.0,555.0 L260.0,555.0 Q256.5,556.8 253.0,560.0 Q251.0,556.8 248.9,555.0 L248.9,555.0 Q245.0,558.5 241.2,564.9 Q237.0,558.5 232.8,555.0 L232.8,555.0 Q229.3,558.4 225.8,564.6 Q221.0,558.4 216.1,555.0 L216.1,555.0 Q211.9,558.2 207.8,564.2 Q204.3,558.2 200.9,555.0 L200.9,555.0 Q197.8,557.3 194.7,561.4 Q191.0,557.3 187.3,555.0 L187.3,555.0 Q184.2,556.9 181.2,560.3 Q178.4,556.9 175.7,555.0 L175.7,555.0 Q173.5,558.2 171.3,564.1 Q167.5,558.2 163.7,555.0 L163.7,555.0 Q158.5,558.0 153.4,563.5 Q150.4,558.0 147.3,555.0 L147.3,555.0 Q143.1,558.3 138.8,564.5 Q134.9,558.3 131.1,555.0 L131.1,555.0 Q129.0,558.1 127.0,563.7 Q124.0,558.1 121.0,555.0 L121.0,555.0 Q117.9,557.9 114.8,563.3 Q111.8,557.9 108.9,555.0 L108.9,555.0 Q105.4,558.4 102.0,564.7 Q99.0,558.4 96.0,555.0 L96.0,555.0 Q92.2,557.2 88.4,561.3 Q86.0,557.2 83.6,555.0 L83.6,555.0 Q80.5,558.1 77.5,563.9 Q75.3,558.1 73.0,555.0 L73.0,555.0 Q70.3,551.6 65.3,548.2 Q70.3,545.9 73.0,543.6 L73.0,543.6 Q69.9,540.1 64.0,536.6 Q69.9,534.5 73.0,532.4 L73.0,532.4 Q69.8,529.7 63.9,526.9 Q69.8,521.8 73.0,516.8 L73.0,516.8 Q69.7,514.1 63.7,511.5 Q69.7,506.9 73.0,502.4 L73.0,502.4 Q70.8,499.4 66.7,496.3 Q70.8,493.4 73.0,490.5 L73.0,490.5 Q70.4,486.7 65.6,482.9 Q70.4,480.2 73.0,477.5 L73.0,477.5 Q71.2,475.6 67.7,473.6 Q71.2,470.6 73.0,467.5 L73.0,467.5 Q71.1,464.0 67.7,460.5 Q71.1,458.6 73.0,456.6 L73.0,456.6 Q71.1,452.6 67.6,448.6 Q71.1,444.6 73.0,440.7 L73.0,440.7 Q70.7,437.9 66.4,435.1 Q70.7,431.8 73.0,428.4 L73.0,428.4 Q70.2,425.1 65.1,421.8 Q70.2,417.8 73.0,413.9 L73.0,413.9 Q70.7,411.7 66.4,409.5 Q70.7,406.0 73.0,402.6 L73.0,402.6 Q70.0,399.4 64.4,396.1 Q70.0,392.4 73.0,388.7 L73.0,388.7 Q70.9,386.2 67.1,383.8 Q70.9,381.0 73.0,378.1 L73.0,378.1 Q69.9,374.8 64.1,371.5 Q69.9,367.7 73.0,363.9 L73.0,363.9 Q70.2,360.2 64.9,356.4 Q70.2,352.3 73.0,348.3 L73.0,348.3 Q70.4,344.8 65.5,341.2 Q70.4,338.4 73.0,335.7 L73.0,335.7 Q70.0,332.5 64.5,329.4 Q70.0,326.0 73.0,322.7 L73.0,322.7 Q70.3,319.5 65.3,316.2 Q70.3,313.6 73.0,311.0 L73.0,311.0 Q70.5,308.5 65.9,306.0 Q70.5,303.3 73.0,300.5 L73.0,300.5 Q69.6,296.8 63.3,293.0 Q69.6,288.7 73.0,284.4 L73.0,284.4 Q69.9,280.9 64.0,277.4 Q69.9,272.7 73.0,268.1 L73.0,268.1 Q71.0,264.1 67.4,260.2 Q71.0,257.5 73.0,254.8 L73.0,254.8 Q69.7,250.5 63.6,246.2 Q69.7,243.2 73.0,240.2 L73.0,240.2 Q70.0,236.4 64.3,232.6 Q70.0,229.0 73.0,225.5 L73.0,225.5 Q70.2,223.6 65.1,221.7 Q70.2,218.3 73.0,214.8 L73.0,214.8 Q69.9,212.8 64.1,210.8 Q69.9,207.3 73.0,203.8 L73.0,203.8 Q71.1,200.5 67.5,197.3 Q71.1,195.2 73.0,193.1 L73.0,193.1 Q71.2,189.8 67.9,186.4 Q71.2,184.1 73.0,181.9 L73.0,181.9 Q69.8,178.9 63.8,175.9 Q69.8,173.5 73.0,171.0 L73.0,171.0 Q69.6,166.9 63.2,162.7 Q69.6,159.0 73.0,155.2 L73.0,155.2 Q71.2,150.7 67.8,146.1 Q71.2,142.9 73.0,139.6 L73.0,139.6 Q70.0,137.0 64.4,134.4 Q70.0,131.2 73.0,128.0Z" fill="#0a1114" transform="translate(1,2)" filter="url(#b2)" opacity=".9"/>
  <path d="M73.0,128.0 Q75.7,125.3 78.4,120.3 Q81.5,125.3 84.7,128.0 L84.7,128.0 Q87.3,125.2 89.9,119.9 Q94.4,125.2 98.9,128.0 L98.9,128.0 Q101.1,124.8 103.2,118.8 Q106.1,124.8 109.0,128.0 L109.0,128.0 Q111.8,124.5 114.7,118.0 Q117.7,124.5 120.6,128.0 L120.6,128.0 Q124.9,125.4 129.2,120.6 Q132.8,125.4 136.5,128.0 L136.5,128.0 Q139.9,125.1 143.2,119.8 Q145.4,125.1 147.5,128.0 L147.5,128.0 Q151.3,125.0 155.1,119.3 Q158.1,125.0 161.2,128.0 L161.2,128.0 Q164.0,124.9 166.7,119.2 Q169.2,124.9 171.6,128.0 L171.6,128.0 Q175.3,126.2 179.0,122.8 Q181.4,126.2 183.8,128.0 L183.8,128.0 Q187.8,125.0 191.9,119.4 Q194.5,125.0 197.1,128.0 L197.1,128.0 Q200.6,124.6 204.1,118.4 Q208.1,124.6 212.1,128.0 L212.1,128.0 Q217.0,125.5 221.9,120.8 Q224.8,125.5 227.7,128.0 L227.7,128.0 Q230.8,126.1 234.0,122.5 Q238.9,126.1 243.8,128.0 L243.8,128.0 Q246.6,124.6 249.4,118.2 Q252.4,124.6 255.3,128.0 L255.3,128.0 Q259.0,125.7 262.6,121.5 Q266.1,125.7 269.7,128.0 L269.7,128.0 Q273.1,125.6 276.4,121.2 Q279.4,125.6 282.4,128.0 L282.4,128.0 Q286.3,124.7 290.2,118.5 Q293.4,124.7 296.5,128.0 L296.5,128.0 Q301.9,124.8 307.2,118.7 Q310.1,124.8 313.0,128.0 L313.0,128.0 Q317.5,126.0 322.0,122.2 Q324.8,126.0 327.7,128.0 L327.7,128.0 Q332.1,124.7 336.4,118.5 Q340.5,124.7 344.5,128.0 L344.5,128.0 Q349.0,125.9 353.5,121.9 Q356.2,125.9 359.0,128.0 L359.0,128.0 Q361.2,130.6 365.4,133.2 Q361.2,137.6 359.0,142.0 L359.0,142.0 Q362.5,145.0 368.9,148.0 Q362.5,153.0 359.0,158.0 L359.0,158.0 Q361.5,161.1 366.1,164.2 Q361.5,168.9 359.0,173.6 L359.0,173.6 Q362.1,177.3 367.8,181.0 Q362.1,183.3 359.0,185.7 L359.0,185.7 Q361.8,187.5 367.1,189.4 Q361.8,192.7 359.0,196.0 L359.0,196.0 Q361.3,200.6 365.7,205.2 Q361.3,208.1 359.0,211.0 L359.0,211.0 Q361.6,216.5 366.5,221.9 Q361.6,224.9 359.0,227.9 L359.0,227.9 Q360.9,231.1 364.4,234.3 Q360.9,237.2 359.0,240.0 L359.0,240.0 Q361.1,242.4 365.0,244.9 Q361.1,247.5 359.0,250.2 L359.0,250.2 Q361.0,252.8 364.8,255.4 Q361.0,260.0 359.0,264.5 L359.0,264.5 Q361.3,269.6 365.6,274.8 Q361.3,277.7 359.0,280.6 L359.0,280.6 Q361.4,284.6 365.9,288.5 Q361.4,292.7 359.0,296.9 L359.0,296.9 Q361.9,300.5 367.2,304.1 Q361.9,307.3 359.0,310.5 L359.0,310.5 Q361.8,314.9 367.1,319.3 Q361.8,321.9 359.0,324.4 L359.0,324.4 Q361.5,328.3 366.2,332.1 Q361.5,335.0 359.0,338.0 L359.0,338.0 Q361.3,341.7 365.5,345.5 Q361.3,347.6 359.0,349.6 L359.0,349.6 Q361.7,352.0 366.7,354.5 Q361.7,358.9 359.0,363.3 L359.0,363.3 Q361.8,365.6 366.9,367.9 Q361.8,372.0 359.0,376.2 L359.0,376.2 Q361.9,378.8 367.2,381.5 Q361.9,386.0 359.0,390.5 L359.0,390.5 Q361.6,394.5 366.3,398.5 Q361.6,401.7 359.0,404.9 L359.0,404.9 Q362.0,408.5 367.5,412.0 Q362.0,414.7 359.0,417.4 L359.0,417.4 Q360.9,420.2 364.3,423.0 Q360.9,425.2 359.0,427.5 L359.0,427.5 Q361.2,431.6 365.3,435.7 Q361.2,440.0 359.0,444.3 L359.0,444.3 Q361.3,447.5 365.6,450.8 Q361.3,454.6 359.0,458.4 L359.0,458.4 Q361.4,461.6 365.8,464.9 Q361.4,467.7 359.0,470.6 L359.0,470.6 Q361.4,474.1 365.9,477.6 Q361.4,480.2 359.0,482.7 L359.0,482.7 Q361.7,485.6 366.8,488.5 Q361.7,490.7 359.0,492.9 L359.0,492.9 Q361.1,496.5 365.1,500.1 Q361.1,502.6 359.0,505.1 L359.0,505.1 Q361.1,507.9 364.9,510.7 Q361.1,513.7 359.0,516.7 L359.0,516.7 Q360.9,520.1 364.5,523.4 Q360.9,527.5 359.0,531.6 L359.0,531.6 Q362.2,534.6 368.2,537.6 Q362.2,540.8 359.0,544.0 L359.0,544.0 Q361.0,547.6 364.8,551.2 Q361.0,553.1 359.0,555.0 L359.0,555.0 Q355.5,558.3 351.9,564.4 Q348.2,558.3 344.4,555.0 L344.4,555.0 Q341.5,557.0 338.6,560.6 Q335.7,557.0 332.9,555.0 L332.9,555.0 Q329.5,558.2 326.1,564.0 Q323.8,558.2 321.5,555.0 L321.5,555.0 Q318.2,557.2 314.9,561.4 Q312.6,557.2 310.3,555.0 L310.3,555.0 Q307.0,558.2 303.7,564.0 Q299.7,558.2 295.8,555.0 L295.8,555.0 Q292.6,557.3 289.3,561.5 Q287.1,557.3 284.9,555.0 L284.9,555.0 Q282.0,557.4 279.2,561.7 Q276.1,557.4 273.0,555.0 L273.0,555.0 Q268.9,557.5 264.9,562.0 Q262.4,557.5 260.0,555.0 L260.0,555.0 Q256.5,556.8 253.0,560.0 Q251.0,556.8 248.9,555.0 L248.9,555.0 Q245.0,558.5 241.2,564.9 Q237.0,558.5 232.8,555.0 L232.8,555.0 Q229.3,558.4 225.8,564.6 Q221.0,558.4 216.1,555.0 L216.1,555.0 Q211.9,558.2 207.8,564.2 Q204.3,558.2 200.9,555.0 L200.9,555.0 Q197.8,557.3 194.7,561.4 Q191.0,557.3 187.3,555.0 L187.3,555.0 Q184.2,556.9 181.2,560.3 Q178.4,556.9 175.7,555.0 L175.7,555.0 Q173.5,558.2 171.3,564.1 Q167.5,558.2 163.7,555.0 L163.7,555.0 Q158.5,558.0 153.4,563.5 Q150.4,558.0 147.3,555.0 L147.3,555.0 Q143.1,558.3 138.8,564.5 Q134.9,558.3 131.1,555.0 L131.1,555.0 Q129.0,558.1 127.0,563.7 Q124.0,558.1 121.0,555.0 L121.0,555.0 Q117.9,557.9 114.8,563.3 Q111.8,557.9 108.9,555.0 L108.9,555.0 Q105.4,558.4 102.0,564.7 Q99.0,558.4 96.0,555.0 L96.0,555.0 Q92.2,557.2 88.4,561.3 Q86.0,557.2 83.6,555.0 L83.6,555.0 Q80.5,558.1 77.5,563.9 Q75.3,558.1 73.0,555.0 L73.0,555.0 Q70.3,551.6 65.3,548.2 Q70.3,545.9 73.0,543.6 L73.0,543.6 Q69.9,540.1 64.0,536.6 Q69.9,534.5 73.0,532.4 L73.0,532.4 Q69.8,529.7 63.9,526.9 Q69.8,521.8 73.0,516.8 L73.0,516.8 Q69.7,514.1 63.7,511.5 Q69.7,506.9 73.0,502.4 L73.0,502.4 Q70.8,499.4 66.7,496.3 Q70.8,493.4 73.0,490.5 L73.0,490.5 Q70.4,486.7 65.6,482.9 Q70.4,480.2 73.0,477.5 L73.0,477.5 Q71.2,475.6 67.7,473.6 Q71.2,470.6 73.0,467.5 L73.0,467.5 Q71.1,464.0 67.7,460.5 Q71.1,458.6 73.0,456.6 L73.0,456.6 Q71.1,452.6 67.6,448.6 Q71.1,444.6 73.0,440.7 L73.0,440.7 Q70.7,437.9 66.4,435.1 Q70.7,431.8 73.0,428.4 L73.0,428.4 Q70.2,425.1 65.1,421.8 Q70.2,417.8 73.0,413.9 L73.0,413.9 Q70.7,411.7 66.4,409.5 Q70.7,406.0 73.0,402.6 L73.0,402.6 Q70.0,399.4 64.4,396.1 Q70.0,392.4 73.0,388.7 L73.0,388.7 Q70.9,386.2 67.1,383.8 Q70.9,381.0 73.0,378.1 L73.0,378.1 Q69.9,374.8 64.1,371.5 Q69.9,367.7 73.0,363.9 L73.0,363.9 Q70.2,360.2 64.9,356.4 Q70.2,352.3 73.0,348.3 L73.0,348.3 Q70.4,344.8 65.5,341.2 Q70.4,338.4 73.0,335.7 L73.0,335.7 Q70.0,332.5 64.5,329.4 Q70.0,326.0 73.0,322.7 L73.0,322.7 Q70.3,319.5 65.3,316.2 Q70.3,313.6 73.0,311.0 L73.0,311.0 Q70.5,308.5 65.9,306.0 Q70.5,303.3 73.0,300.5 L73.0,300.5 Q69.6,296.8 63.3,293.0 Q69.6,288.7 73.0,284.4 L73.0,284.4 Q69.9,280.9 64.0,277.4 Q69.9,272.7 73.0,268.1 L73.0,268.1 Q71.0,264.1 67.4,260.2 Q71.0,257.5 73.0,254.8 L73.0,254.8 Q69.7,250.5 63.6,246.2 Q69.7,243.2 73.0,240.2 L73.0,240.2 Q70.0,236.4 64.3,232.6 Q70.0,229.0 73.0,225.5 L73.0,225.5 Q70.2,223.6 65.1,221.7 Q70.2,218.3 73.0,214.8 L73.0,214.8 Q69.9,212.8 64.1,210.8 Q69.9,207.3 73.0,203.8 L73.0,203.8 Q71.1,200.5 67.5,197.3 Q71.1,195.2 73.0,193.1 L73.0,193.1 Q71.2,189.8 67.9,186.4 Q71.2,184.1 73.0,181.9 L73.0,181.9 Q69.8,178.9 63.8,175.9 Q69.8,173.5 73.0,171.0 L73.0,171.0 Q69.6,166.9 63.2,162.7 Q69.6,159.0 73.0,155.2 L73.0,155.2 Q71.2,150.7 67.8,146.1 Q71.2,142.9 73.0,139.6 L73.0,139.6 Q70.0,137.0 64.4,134.4 Q70.0,131.2 73.0,128.0Z" fill="#16262e" filter="url(#b1)"/>
  <g clip-path="url(#bjc)"><rect x="80" y="132" width="273" height="420" fill="#2c5a6c" filter="url(#b12)"/></g>
  <path d="M67,119 l4,3 l-1,2 Z" fill="#222" filter="url(#b2)"/>
<rect x="387" y="311" width="205" height="146" fill="#2c5a6c"/>
<path d="M384.0,311 L388.0,307 L391.0,308 L390.0,311 Z M384.0,456 L388.0,460 L391.0,459 L390.0,456 Z M394.0,311 L398.0,307 L401.0,308 L400.0,311 Z M394.0,456 L398.0,460 L401.0,459 L400.0,456 Z M404.0,311 L408.0,307 L411.0,308 L410.0,311 Z M404.0,456 L408.0,460 L411.0,459 L410.0,456 Z M414.0,311 L418.0,307 L421.0,308 L420.0,311 Z M414.0,456 L418.0,460 L421.0,459 L420.0,456 Z M424.0,311 L428.0,307 L431.0,308 L430.0,311 Z M424.0,456 L428.0,460 L431.0,459 L430.0,456 Z M434.0,311 L438.0,307 L441.0,308 L440.0,311 Z M434.0,456 L438.0,460 L441.0,459 L440.0,456 Z M444.0,311 L448.0,307 L451.0,308 L450.0,311 Z M444.0,456 L448.0,460 L451.0,459 L450.0,456 Z M454.0,311 L458.0,307 L461.0,308 L460.0,311 Z M454.0,456 L458.0,460 L461.0,459 L460.0,456 Z M464.0,311 L468.0,307 L471.0,308 L470.0,311 Z M464.0,456 L468.0,460 L471.0,459 L470.0,456 Z M474.0,311 L478.0,307 L481.0,308 L480.0,311 Z M474.0,456 L478.0,460 L481.0,459 L480.0,456 Z M484.0,311 L488.0,307 L491.0,308 L490.0,311 Z M484.0,456 L488.0,460 L491.0,459 L490.0,456 Z M494.0,311 L498.0,307 L501.0,308 L500.0,311 Z M494.0,456 L498.0,460 L501.0,459 L500.0,456 Z M504.0,311 L508.0,307 L511.0,308 L510.0,311 Z M504.0,456 L508.0,460 L511.0,459 L510.0,456 Z M514.0,311 L518.0,307 L521.0,308 L520.0,311 Z M514.0,456 L518.0,460 L521.0,459 L520.0,456 Z M524.0,311 L528.0,307 L531.0,308 L530.0,311 Z M524.0,456 L528.0,460 L531.0,459 L530.0,456 Z M534.0,311 L538.0,307 L541.0,308 L540.0,311 Z M534.0,456 L538.0,460 L541.0,459 L540.0,456 Z M544.0,311 L548.0,307 L551.0,308 L550.0,311 Z M544.0,456 L548.0,460 L551.0,459 L550.0,456 Z M554.0,311 L558.0,307 L561.0,308 L560.0,311 Z M554.0,456 L558.0,460 L561.0,459 L560.0,456 Z M564.0,311 L568.0,307 L571.0,308 L570.0,311 Z M564.0,456 L568.0,460 L571.0,459 L570.0,456 Z M574.0,311 L578.0,307 L581.0,308 L580.0,311 Z M574.0,456 L578.0,460 L581.0,459 L580.0,456 Z M584.0,311 L588.0,307 L591.0,308 L590.0,311 Z M584.0,456 L588.0,460 L591.0,459 L590.0,456 Z M387.5,308.0 L383.5,312.0 L384.5,315.0 L387.5,314.0 Z M591.5,308.0 L595.5,312.0 L594.5,315.0 L591.5,314.0 Z M387.5,318.0 L383.5,322.0 L384.5,325.0 L387.5,324.0 Z M591.5,318.0 L595.5,322.0 L594.5,325.0 L591.5,324.0 Z M387.5,328.0 L383.5,332.0 L384.5,335.0 L387.5,334.0 Z M591.5,328.0 L595.5,332.0 L594.5,335.0 L591.5,334.0 Z M387.5,338.0 L383.5,342.0 L384.5,345.0 L387.5,344.0 Z M591.5,338.0 L595.5,342.0 L594.5,345.0 L591.5,344.0 Z M387.5,348.0 L383.5,352.0 L384.5,355.0 L387.5,354.0 Z M591.5,348.0 L595.5,352.0 L594.5,355.0 L591.5,354.0 Z M387.5,358.0 L383.5,362.0 L384.5,365.0 L387.5,364.0 Z M591.5,358.0 L595.5,362.0 L594.5,365.0 L591.5,364.0 Z M387.5,368.0 L383.5,372.0 L384.5,375.0 L387.5,374.0 Z M591.5,368.0 L595.5,372.0 L594.5,375.0 L591.5,374.0 Z M387.5,378.0 L383.5,382.0 L384.5,385.0 L387.5,384.0 Z M591.5,378.0 L595.5,382.0 L594.5,385.0 L591.5,384.0 Z M387.5,388.0 L383.5,392.0 L384.5,395.0 L387.5,394.0 Z M591.5,388.0 L595.5,392.0 L594.5,395.0 L591.5,394.0 Z M387.5,398.0 L383.5,402.0 L384.5,405.0 L387.5,404.0 Z M591.5,398.0 L595.5,402.0 L594.5,405.0 L591.5,404.0 Z M387.5,408.0 L383.5,412.0 L384.5,415.0 L387.5,414.0 Z M591.5,408.0 L595.5,412.0 L594.5,415.0 L591.5,414.0 Z M387.5,418.0 L383.5,422.0 L384.5,425.0 L387.5,424.0 Z M591.5,418.0 L595.5,422.0 L594.5,425.0 L591.5,424.0 Z M387.5,428.0 L383.5,432.0 L384.5,435.0 L387.5,434.0 Z M591.5,428.0 L595.5,432.0 L594.5,435.0 L591.5,434.0 Z M387.5,438.0 L383.5,442.0 L384.5,445.0 L387.5,444.0 Z M591.5,438.0 L595.5,442.0 L594.5,445.0 L591.5,444.0 Z M387.5,448.0 L383.5,452.0 L384.5,455.0 L387.5,454.0 Z M591.5,448.0 L595.5,452.0 L594.5,455.0 L591.5,454.0 Z" fill="#23495a"/>
<rect x="382.5" y="306.5" width="214" height="155" fill="none" stroke="#9aaab0" stroke-width="1" stroke-dasharray="1,2"/>
 </g>
</svg>
<!-- panel dock -->
<div class="a" style="left:733px;top:77px;width:291px;height:650px;background:#595959"></div>
<div class="a" style="left:734px;top:78px;width:290px;height:16px;background:#5f5f5f"></div>
<svg width="291" height="18" style="left:733px;top:77px">
 <path d="M8.5,3 v13 M10.5,3 v13 M12.5,3 v13" stroke="#9a9a9a"/>
 <path d="M28,5 l-5,4.5 l5,4.5Z M33,5 l-5,4.5 l5,4.5Z" fill="#bdbdbd"/>
 <path d="M37.5,3 v13 M39.5,3 v13 M41.5,3 v13" stroke="#9a9a9a"/>
 <path d="M276,5 l5,4.5 l-5,4.5Z M281,5 l5,4.5 l-5,4.5Z" fill="#bdbdbd"/>
</svg>
<!-- icon column -->
<div class="a" style="left:737px;top:95px;width:27px;height:68px;background:#ececec;border-radius:3px"></div>
<div class="a" style="left:737px;top:95px;width:27px;height:10px;background:linear-gradient(#e4e4e4,#c8c8c8);border-radius:3px 3px 0 0"></div>
<div class="a" style="left:740px;top:108px;width:21px;height:22px;border:1px solid #d2d2d2;border-radius:3px;background:#e6e6e6"></div>
<svg width="20" height="20" style="left:741px;top:109px">
 <rect x="3.5" y="2.5" width="4" height="4" fill="#fff" stroke="#333"/>
 <rect x="3.5" y="8.5" width="4" height="4" fill="#fff" stroke="#333"/>
 <rect x="3" y="14" width="5" height="5" fill="#444"/>
 <path d="M12,17 q5,-3 4.5,-8 q-.5,-4 -4.5,-4.5" fill="none" stroke="#333" stroke-width="2.2"/>
 <path d="M9,4.5 l4,-3 v6Z" fill="#333"/>
</svg>
<div class="a" style="left:740px;top:135px;width:21px;height:25px;border:1px solid #d8d8d8;border-radius:3px;background:#ececec"></div>
<div class="a" style="left:742px;top:141px;width:18px;height:13px;border:1px solid #333;background:linear-gradient(#f4f4f4,#bbb)"></div>
<div class="a" style="left:746px;top:143px;width:0;height:0;border-top:4.5px solid transparent;border-bottom:4.5px solid transparent;border-left:9px solid #333"></div>
<div class="a" style="left:737px;top:165px;width:27px;height:10px;background:linear-gradient(#e8e8e8,#c8c8c8);border-radius:3px 3px 0 0"></div>
<div class="a" style="left:737px;top:175px;width:27px;height:552px;background:#ececec"></div>
<!-- navigator panel -->
<div class="a" style="left:766px;top:95px;width:254px;height:159px;background:#ececec;border-radius:3px 3px 0 0"></div>
<div class="a" style="left:766px;top:95px;width:254px;height:26px;background:linear-gradient(#ececec,#cfcfcf);border-radius:3px 3px 0 0"></div>
<div class="a" style="left:772px;top:103px;width:55px;height:18px;background:#ececec;border:1px solid #b8b8b8;border-bottom:none;border-radius:4px 4px 0 0"></div>
<div class="t" style="left:777px;top:105px;font-size:12px;color:#222">导航器</div>
<svg width="10" height="10" style="left:813px;top:108px"><path d="M1.5,1.5 L8.5,8.5 M8.5,1.5 L1.5,8.5" stroke="#666" stroke-width="1.1"/></svg>
<div class="a" style="left:829px;top:103px;width:46px;height:18px;background:linear-gradient(#e8e8e8,#d4d4d4);border:1px solid #b0b0b0;border-bottom:none;border-radius:4px 4px 0 0"></div>
<div class="t" style="left:834px;top:105px;font-size:12px;color:#222">直方图</div>
<div class="a" style="left:877px;top:103px;width:36px;height:18px;background:linear-gradient(#e8e8e8,#d4d4d4);border:1px solid #b0b0b0;border-bottom:none;border-radius:4px 4px 0 0"></div>
<div class="t" style="left:883px;top:105px;font-size:12px;color:#222">信息</div>
<div class="a" style="left:766px;top:120px;width:254px;height:1px;background:#b8b8b8"></div>
<div class="a" style="left:773px;top:120px;width:53px;height:1px;background:#ececec"></div>
<svg width="254" height="30" style="left:766px;top:95px">
 <path d="M231,8.5 h7" stroke="#555" stroke-width="1.5"/>
 <path d="M243.5,4.5 l7,7 M250.5,4.5 l-7,7" stroke="#555" stroke-width="1.1"/>
 <path d="M229,26 l9,-9 h16 v9Z" fill="#ececec"/>
 <path d="M229,25.5 l9,-8.5" stroke="#b8b8b8"/>
 <path d="M236,21 l3,3 l3,-3Z" fill="#222"/>
 <path d="M243,19.5 h8 M243,22.5 h8 M243,25.5 h8" stroke="#333"/>
</svg>
<div class="a" style="left:820px;top:127px;width:146px;height:103px;border:3px solid #c96064;background:#fff"></div>
<svg width="1024" height="768" style="left:0;top:0">
 <path d="M824.5,132.5 L825.9,131.3 L828.0,132.5 L829.9,131.5 L831.8,132.5 L833.8,131.5 L835.7,132.5 L837.4,131.5 L839.3,132.5 L841.4,131.3 L843.0,132.5 L844.3,131.4 L846.2,132.5 L848.1,131.0 L849.7,132.5 L851.9,131.3 L853.5,132.5 L855.2,131.4 L856.6,132.5 L858.0,131.3 L860.3,132.5 L861.7,131.4 L863.6,132.5 L865.9,131.4 L867.4,132.5 L869.2,131.5 L871.3,132.5 L872.9,131.5 L874.8,132.5 L876.8,131.4 L878.7,132.5 L880.6,131.2 L881.8,132.5 L883.0,131.5 L885.0,132.5 L886.3,131.5 L887.5,132.5 L889.0,134.2 L887.5,136.0 L888.8,137.3 L887.5,139.4 L888.6,141.3 L887.5,143.0 L888.5,145.0 L887.5,146.9 L888.6,148.5 L887.5,150.5 L889.0,152.1 L887.5,154.5 L889.0,156.1 L887.5,158.2 L888.5,159.9 L887.5,161.9 L888.8,164.0 L887.5,165.5 L888.7,167.4 L887.5,168.6 L888.7,170.3 L887.5,172.2 L888.8,173.6 L887.5,176.2 L888.7,178.0 L887.5,180.0 L888.7,181.4 L887.5,183.2 L888.8,184.4 L887.5,186.3 L888.5,188.5 L887.5,190.1 L888.7,192.2 L887.5,193.9 L888.9,195.4 L887.5,197.1 L889.0,198.6 L887.5,200.4 L888.9,201.9 L887.5,203.7 L888.6,205.9 L887.5,207.4 L888.5,209.5 L887.5,210.7 L889.0,212.7 L887.5,213.8 L888.5,215.2 L887.5,217.4 L888.7,219.1 L887.5,220.6 L888.7,222.2 L887.5,224.6 L888.6,225.9 L887.5,226.5 L886.2,227.8 L883.9,226.5 L881.9,227.9 L880.5,226.5 L879.1,227.9 L877.1,226.5 L874.8,227.9 L873.4,226.5 L872.1,227.5 L869.9,226.5 L868.0,227.6 L866.4,226.5 L865.1,227.9 L863.3,226.5 L861.8,227.6 L860.3,226.5 L858.8,227.7 L856.7,226.5 L854.9,228.0 L853.2,226.5 L850.7,227.5 L849.3,226.5 L847.3,227.8 L845.4,226.5 L844.1,228.0 L841.9,226.5 L840.3,227.8 L838.2,226.5 L836.8,227.9 L834.5,226.5 L832.7,227.7 L830.8,226.5 L828.9,227.5 L827.2,226.5 L825.7,227.9 L824.5,226.5 L823.1,224.4 L824.5,222.7 L823.5,220.6 L824.5,218.8 L823.2,217.1 L824.5,215.2 L823.4,213.6 L824.5,212.1 L823.5,210.7 L824.5,208.9 L823.2,207.7 L824.5,205.5 L823.3,203.3 L824.5,201.7 L823.0,200.1 L824.5,198.7 L823.0,196.3 L824.5,194.7 L823.3,193.4 L824.5,191.6 L823.4,190.0 L824.5,187.8 L823.4,185.9 L824.5,184.7 L823.3,182.4 L824.5,180.7 L823.2,179.1 L824.5,177.3 L823.4,175.7 L824.5,173.6 L823.4,171.9 L824.5,170.1 L823.5,168.6 L824.5,166.2 L823.5,164.6 L824.5,162.4 L823.2,160.8 L824.5,158.5 L823.4,157.2 L824.5,155.5 L823.0,153.2 L824.5,151.7 L823.0,149.3 L824.5,147.8 L823.0,146.3 L824.5,143.8 L823.4,142.1 L824.5,140.5 L823.3,138.4 L824.5,137.0 L823.4,135.6 L824.5,133.6 L823.2,132.5Z" fill="#2c5a6c" stroke="#1e3a44" stroke-width="1"/>
 <rect x="893" y="172" width="47" height="33" fill="#2c5a6c" stroke="#5b7b88" stroke-width="0.8" stroke-dasharray="1,1"/>
</svg>
<div class="a" style="left:886px;top:234px;width:116px;height:1px;background:#c0c0c0"></div>
<div class="a" style="left:897px;top:243px;width:74px;height:2px;background:#a8a8a8;border-bottom:1px solid #fff"></div>
<svg width="12" height="12" style="left:920px;top:237px"><path d="M2.5,3.5 a3.5,3.5 0 0 1 7,0 v7 h-7Z" fill="#e4e4e4" stroke="#888"/></svg>
<svg width="18" height="10" style="left:981px;top:239px"><path d="M1,8.5 L6,3 L9,6 L12,2 L17,8.5Z" fill="#fff" stroke="#222" stroke-width="1.1"/><path d="M0,8.5 h18" stroke="#222" stroke-width="1.5"/></svg>
<svg width="9" height="9" style="left:1010px;top:240px" fill="#999"><rect x="6" y="0" width="1" height="1"/><rect x="4" y="2" width="1" height="1"/><rect x="6" y="2" width="1" height="1"/><rect x="2" y="4" width="1" height="1"/><rect x="4" y="4" width="1" height="1"/><rect x="6" y="4" width="1" height="1"/><rect x="0" y="6" width="1" height="1"/><rect x="2" y="6" width="1" height="1"/><rect x="4" y="6" width="1" height="1"/><rect x="6" y="6" width="1" height="1"/></svg>
<!-- color panel -->
<div class="a" style="left:766px;top:257px;width:254px;height:144px;background:#ececec;border-radius:3px 3px 0 0"></div>
<div class="a" style="left:766px;top:257px;width:254px;height:26px;background:linear-gradient(#ececec,#cfcfcf);border-radius:3px 3px 0 0"></div>
<div class="a" style="left:772px;top:265px;width:118px;height:18px;background:#ececec;border:1px solid #b8b8b8;border-bottom:none;border-radius:4px 4px 0 0"></div>
<div class="a" style="left:766px;top:282px;width:254px;height:1px;background:#b8b8b8"></div>
<svg width="254" height="30" style="left:766px;top:257px">
 <path d="M231,8.5 h7" stroke="#555" stroke-width="1.5"/>
 <path d="M243.5,4.5 l7,7 M250.5,4.5 l-7,7" stroke="#555" stroke-width="1.1"/>
 <path d="M229,26 l9,-9 h16 v9Z" fill="#ececec"/>
 <path d="M229,25.5 l9,-8.5" stroke="#b8b8b8"/>
 <path d="M236,21 l3,3 l3,-3Z" fill="#222"/>
 <path d="M243,19.5 h8 M243,22.5 h8 M243,25.5 h8" stroke="#333"/>
</svg>
<div class="a" style="left:820px;top:299px;width:100px;height:6px;background:linear-gradient(90deg,#2c5a6c,#9a4a5a 50%,#e26070)"></div>
<div class="a" style="left:820px;top:325px;width:100px;height:6px;background:linear-gradient(90deg,#2c5a6c,#3a9a6a 50%,#4ae078)"></div>
<div class="a" style="left:820px;top:351px;width:100px;height:6px;background:linear-gradient(90deg,#2c5a6c,#3050b0 50%,#3a5ae8)"></div>
<div class="inp" style="left:926px;top:292px;width:35px;height:21px;border-color:#e2e2e2"></div>
<div class="t" style="left:930px;top:296px;font-size:11px;color:#111">44</div>
<div class="inp" style="left:926px;top:318px;width:35px;height:21px;border-color:#e2e2e2"></div>
<div class="t" style="left:930px;top:322px;font-size:11px;color:#111">90</div>
<div class="inp" style="left:926px;top:344px;width:35px;height:21px;border-color:#e2e2e2"></div>
<div class="t" style="left:930px;top:348px;font-size:11px;color:#111">108</div>
<div class="a" style="left:820px;top:376px;width:144px;height:15px;background:linear-gradient(90deg,#30c0f0 0%,#3080e0 30%,#2050c0 44%,#101880 56%,#602090 66%,#d02a80 80%,#e82040 94%,#e00010 100%)"></div>
<div class="a" style="left:820px;top:376px;width:144px;height:15px;background:linear-gradient(#ffffffcc,#ffffff00 45%,#00000000 55%,#000000cc)"></div>
<div class="a" style="left:964px;top:376px;width:8px;height:7px;background:#fff"></div>
<div class="a" style="left:964px;top:383px;width:8px;height:8px;background:#000"></div>
<!-- layers panel -->
<div class="a" style="left:766px;top:404px;width:254px;height:316px;background:#ececec;border-radius:3px 3px 0 0"></div>
<div class="a" style="left:766px;top:404px;width:254px;height:26px;background:linear-gradient(#ececec,#cfcfcf);border-radius:3px 3px 0 0"></div>
<div class="a" style="left:772px;top:412px;width:118px;height:18px;background:#ececec;border:1px solid #b8b8b8;border-bottom:none;border-radius:4px 4px 0 0"></div>
<div class="a" style="left:766px;top:429px;width:254px;height:1px;background:#b8b8b8"></div>
<svg width="254" height="30" style="left:766px;top:404px">
 <path d="M231,8.5 h7" stroke="#555" stroke-width="1.5"/>
 <path d="M243.5,4.5 l7,7 M250.5,4.5 l-7,7" stroke="#555" stroke-width="1.1"/>
 <path d="M229,26 l9,-9 h16 v9Z" fill="#ececec"/>
 <path d="M229,25.5 l9,-8.5" stroke="#b8b8b8"/>
 <path d="M236,21 l3,3 l3,-3Z" fill="#222"/>
 <path d="M243,19.5 h8 M243,22.5 h8 M243,25.5 h8" stroke="#333"/>
</svg>
<div class="t" style="left:868px;top:437px;font-size:12px;color:#111">不透明度:</div>
<div class="inp" style="left:919px;top:434px;width:39px;height:18px;border-color:#bdbdbd"></div>
<div class="t" style="left:922px;top:437px;font-size:11px;color:#111">100%</div>
<div class="a" style="left:958px;top:434px;width:17px;height:18px;border:1px solid #bdbdbd;background:linear-gradient(#f0f0f0,#d4d4d4)"></div>
<div class="a" style="left:965px;top:440px;width:0;height:0;border-top:3px solid transparent;border-bottom:3px solid transparent;border-left:4px solid #556"></div>
<div class="a" style="left:766px;top:457px;width:254px;height:1px;background:#c8c8c8"></div>
<div class="t" style="left:889px;top:465px;font-size:12px;color:#111">填充:</div>
<div class="inp" style="left:919px;top:462px;width:39px;height:18px;border-color:#bdbdbd"></div>
<div class="t" style="left:922px;top:465px;font-size:11px;color:#111">100%</div>
<div class="a" style="left:958px;top:462px;width:17px;height:18px;border:1px solid #bdbdbd;background:linear-gradient(#f0f0f0,#d4d4d4)"></div>
<div class="a" style="left:965px;top:468px;width:0;height:0;border-top:3px solid transparent;border-bottom:3px solid transparent;border-left:4px solid #556"></div>
<div class="a" style="left:766px;top:484px;width:254px;height:1px;background:#c8c8c8"></div>
<div class="a" style="left:766px;top:485px;width:237px;height:31px;background:#3a93f0"></div>
<!-- layers scrollbar -->
<div class="a" style="left:1003px;top:485px;width:15px;height:217px;background:#ececec"></div>
<div class="a" style="left:1007px;top:491px;width:0;height:0;border-left:4px solid transparent;border-right:4px solid transparent;border-bottom:4px solid #333"></div>
<div class="a" style="left:1005px;top:503px;width:11px;height:172px;border:1px solid #b4b4b4;border-radius:3px;background:linear-gradient(90deg,#f4f4f4,#d0d0d0)"></div>
<div class="a" style="left:1007px;top:587px;width:7px;height:6px;border-top:1px solid #777;border-bottom:1px solid #777"></div>
<div class="a" style="left:1007px;top:589px;width:7px;height:1px;background:#777"></div>
<div class="a" style="left:1007px;top:691px;width:0;height:0;border-left:4px solid transparent;border-right:4px solid transparent;border-top:4px solid #333"></div>
<div class="a" style="left:766px;top:548px;width:237px;height:1px;background:#bcbcbc"></div>
<div class="a" style="left:992px;top:549px;width:11px;height:31px;background:#dedede"></div>
<div class="a" style="left:994px;top:562px;width:0;height:0;border-left:4px solid transparent;border-right:4px solid transparent;border-bottom:4px solid #333"></div>
<div class="t" style="left:974px;top:557px;font-family:'Liberation Serif',serif;font-style:italic;font-weight:bold;font-size:14px;color:#333">fx</div>
<div class="a" style="left:766px;top:600px;width:237px;height:1px;background:#bcbcbc"></div>
<div class="a" style="left:766px;top:619px;width:237px;height:1px;background:#bcbcbc"></div>
<div class="a" style="left:766px;top:638px;width:237px;height:1px;background:#bcbcbc"></div>
<div class="a" style="left:766px;top:657px;width:237px;height:1px;background:#bcbcbc"></div>
<div class="t" style="left:881px;top:659px;font-size:12px;color:#111">浮雕</div>
<div class="a" style="left:766px;top:675px;width:237px;height:1px;background:#bcbcbc"></div>
<svg width="12" height="13" style="left:977px;top:685px"><path d="M3,6 v-2 a3,3 0 0 1 6,0 v2" fill="none" stroke="#333" stroke-width="1.3"/><rect x="1.5" y="6.5" width="9" height="6" fill="#fff" stroke="#333"/></svg>
<div class="a" style="left:766px;top:700px;width:254px;height:1px;background:#c0c0c0"></div>
<svg width="140" height="20" style="left:880px;top:700px">
 <rect x="1.5" y="4.5" width="8" height="10" fill="none" stroke="#333"/>
 <circle cx="31" cy="10" r="6" fill="#fff" stroke="#333" stroke-width="1.4"/>
 <path d="M26.8,14.2 A6,6 0 0 1 35.2,5.8Z" fill="#333"/>
 <path d="M37,15 l2,2 l2,-2Z" fill="#333"/>
 <path d="M53.5,6.5 h5 l1,1 h7 v8 h-13Z" fill="#f4f4f4" stroke="#333"/>
 <rect x="78.5" y="5.5" width="11" height="10" fill="#f4f4f4" stroke="#333"/>
 <path d="M83,11 h4 v3" fill="none" stroke="#333"/>
 <path d="M106.5,6.5 h9 M108,6.5 v-1.5 h5 v1.5 M107.5,7.5 l1,8 h5 l1,-8" fill="#eee" stroke="#333"/>
</svg>
<svg width="9" height="9" style="left:1010px;top:707px" fill="#999"><rect x="6" y="0" width="1" height="1"/><rect x="4" y="2" width="1" height="1"/><rect x="6" y="2" width="1" height="1"/><rect x="2" y="4" width="1" height="1"/><rect x="4" y="4" width="1" height="1"/><rect x="6" y="4" width="1" height="1"/><rect x="0" y="6" width="1" height="1"/><rect x="2" y="6" width="1" height="1"/><rect x="4" y="6" width="1" height="1"/><rect x="6" y="6" width="1" height="1"/></svg>
<!-- context menu -->
<div class="a" style="left:674px;top:174px;width:210px;height:554px;background:#f0f0f0;border:1px solid #979797;box-shadow:2px 2px 2px rgba(0,0,0,.3)"></div>
<div class="a" style="left:703px;top:175px;width:1px;height:552px;background:#e2e3e3"></div>
<div class="a" style="left:704px;top:175px;width:1px;height:552px;background:#fff"></div>
<div class="cm" style="top:181px">图层属性...</div>
<div class="cm" style="top:203px">混合选项...</div>
<div class="sep" style="top:225px"></div>
<div class="cm" style="top:233px">复制图层...</div>
<div class="cm" style="top:255px">删除图层</div>
<div class="sep" style="top:277px"></div>
<div class="cm" style="top:285px">转换为智能对象</div>
<div class="cm" style="top:307px">通过拷贝新建智能对象</div>
<div class="cm" style="top:329px">编辑内容</div>
<div class="cm" style="top:351px">导出内容...</div>
<div class="cm" style="top:373px">替换内容...</div>
<div class="sep" style="top:395px"></div>
<div class="cm" style="top:403px">栅格化图层</div>
<div class="sep" style="top:425px"></div>
<div class="cm d" style="top:433px">启用图层蒙版</div>
<div class="cm d" style="top:455px">启用矢量蒙版</div>
<div class="cm" style="top:477px">创建剪贴蒙版</div>
<div class="sep" style="top:499px"></div>
<div class="cm d" style="top:507px">链接图层</div>
<div class="cm d" style="top:529px">选择链接图层</div>
<div class="sep" style="top:551px"></div>
<div class="cm" style="top:559px">选择相似图层</div>
<div class="sep" style="top:581px"></div>
<div class="cm d" style="top:589px">拷贝图层样式</div>
<div class="cm d" style="top:611px">粘贴图层样式</div>
<div class="cm d" style="top:633px">清除图层样式</div>
<div class="sep" style="top:655px"></div>
<div class="cm d" style="top:663px">合并图层</div>
<div class="cm" style="top:685px">合并可见图层</div>
<div class="cm" style="top:707px">拼合图像</div>
<!-- taskbar -->
<div class="a" style="left:0;top:728px;width:1024px;height:40px;background:linear-gradient(90deg,#1a4a6e 0%,#1e5a82 25%,#1f5f88 50%,#1d5a82 70%,#1a4c70 100%)"></div>
<div class="a" style="left:0;top:728px;width:1024px;height:40px;background:linear-gradient(#ffffff10,#ffffff00 40%,#00000008)"></div>
<div class="a" style="left:0;top:727px;width:1024px;height:1px;background:#0e2234"></div>
<div class="a" style="left:0;top:728px;width:1024px;height:1px;background:#6b94b2"></div>
<!-- start orb -->
<div class="a" style="left:8px;top:730px;width:38px;height:37px;border-radius:50%;background:linear-gradient(#d4e2ea 0%,#a8c4d2 30%,#6f98b0 48%,#124a86 52%,#0e58a8 72%,#1aa8e8 92%,#30d0ff 100%);border:1px solid #8ab4cc;box-shadow:0 0 2px #0a2840"></div>
<svg width="24" height="24" style="left:15px;top:736px">
 <path d="M3,4 q4,-3 9,0 l-1,6 q-4,-2 -9,0Z" fill="#f05a22"/>
 <path d="M13,5 q4,2 9,0 l-1,7 q-5,2 -9,0Z" fill="#8cc43a"/>
 <path d="M2,12 q4,-2 9,0 l-1,7 q-4,-2 -9,0Z" fill="#30a4e8"/>
 <path d="M12,13 q4,2 9,0 l-1,7 q-5,2 -9,0Z" fill="#ffc020"/>
</svg>
<!-- explorer -->
<svg width="34" height="30" style="left:72px;top:733px">
 <path d="M2.5,4.5 h14 l2,2 h13 v20 h-29Z" fill="#f0dc90" stroke="#c8b060" stroke-width=".8"/>
 <rect x="4" y="7" width="26" height="5" fill="#fff6d8"/>
 <rect x="5" y="3" width="4" height="2.5" fill="#40a040"/><rect x="12" y="5" width="3" height="2" fill="#a04020"/>
 <path d="M1.5,11.5 h31 v16 h-31Z" fill="#f6e6a8" stroke="#d0b868" stroke-width=".8"/>
 <path d="M9,18.5 h15 v9 h-4 v-5 h-7 v5 h-4Z" fill="#b4e2f4" stroke="#7ab4cc" stroke-width=".8"/>
 <rect x="13" y="23" width="7" height="3" fill="#f0d070"/>
</svg>
<!-- IE -->
<svg width="40" height="36" style="left:132px;top:730px">
 <defs><linearGradient id="ieg" x1="0" y1="0" x2="0" y2="1"><stop offset="0" stop-color="#8ee0fa"/><stop offset="1" stop-color="#1a90d8"/></linearGradient></defs>
 <path d="M30.5,20 A11,10.5 0 1 0 28,26" fill="none" stroke="url(#ieg)" stroke-width="6"/>
 <path d="M10,19 h21" stroke="#58bff0" stroke-width="4"/>
 <path d="M7,33 C1,30 8,10 26,4 C35,1 38,5 34,11" fill="none" stroke="#e8c030" stroke-width="2.8"/>
</svg>
<!-- PS active -->
<div class="a" style="left:184px;top:729px;width:58px;height:38px;border:1px solid #d0e2ee;border-radius:3px;background:linear-gradient(90deg,#a0b8c8,#b8cad6 50%,#98b0c2)"></div>
<div class="a" style="left:198px;top:733px;width:29px;height:29px;background:linear-gradient(#2f68b8,#173f86);border:1px solid #0f2a5a;box-shadow:0 1px 2px #0008"></div>
<div class="t" style="left:204px;top:738px;font-size:15px;line-height:16px;color:#e4f0ff">Ps</div>
<!-- tray -->
<div class="t" style="left:841px;top:740px;font-family:'Liberation Mono',monospace;font-size:11px;color:#fff">CH</div>
<svg width="16" height="14" style="left:861px;top:738px"><rect x="1" y="5" width="14" height="8" rx="1" fill="#dfe8ef" stroke="#9ab"/><path d="M3,8 h10 M3,10.5 h10" stroke="#8899aa" stroke-dasharray="1.5,1"/><path d="M9,5 q2,-3 6,-4" stroke="#dfe8ef" fill="none"/></svg>
<div class="a" style="left:890px;top:746px;width:0;height:0;border-left:4px solid transparent;border-right:4px solid transparent;border-bottom:4px solid #fff"></div>
<svg width="16" height="16" style="left:910px;top:740px"><path d="M2,5 h3 l5,-4 v14 l-5,-4 h-3Z" fill="#eef4f8" stroke="#8aa"/><path d="M12,5 q2,3 0,6" fill="none" stroke="#fff" stroke-width="1"/></svg>
<div class="t" style="left:956px;top:732px;font-size:13px;line-height:15px;color:#fff">12:06</div>
<div class="t" style="left:945px;top:750px;font-size:13px;line-height:15px;color:#fff">2014/4/4</div>
<div class="a" style="left:1010px;top:729px;width:13px;height:38px;border:1px solid #8ab0c8;border-radius:2px;background:linear-gradient(90deg,#3a7098,#2a6088)"></div>
<script>
(function(){
  try{
    var t=document.createElement('span');
    t.style.cssText='position:absolute;left:-9999px;top:0;font-size:100px;white-space:nowrap;font-family:"Liberation Sans",sans-serif';
    t.textContent='\u56fe\u5c42\u5c5e\u6027';
    document.body.appendChild(t);
    var w=t.getBoundingClientRect().width;
    document.body.removeChild(t);
    if(w>=370) return;
    var re=/[\u4e00-\u9fff]/;
    var walker=document.createTreeWalker(document.body,NodeFilter.SHOW_TEXT,null,false);
    var nodes=[],n;
    while((n=walker.nextNode())){ if(re.test(n.nodeValue)) nodes.push(n); }
    nodes.forEach(function(node){
      var f=document.createDocumentFragment(), buf='';
      var v=node.nodeValue;
      for(var i=0;i<v.length;i++){
        var c=v.charAt(i);
        if(re.test(c)){
          if(buf){f.appendChild(document.createTextNode(buf));buf='';}
          var g=document.createElement('i'); g.className='cjg'; f.appendChild(g);
        } else buf+=c;
      }
      if(buf) f.appendChild(document.createTextNode(buf));
      node.parentNode.replaceChild(f,node);
    });
  }catch(e){}
})();
</script></body></html>
